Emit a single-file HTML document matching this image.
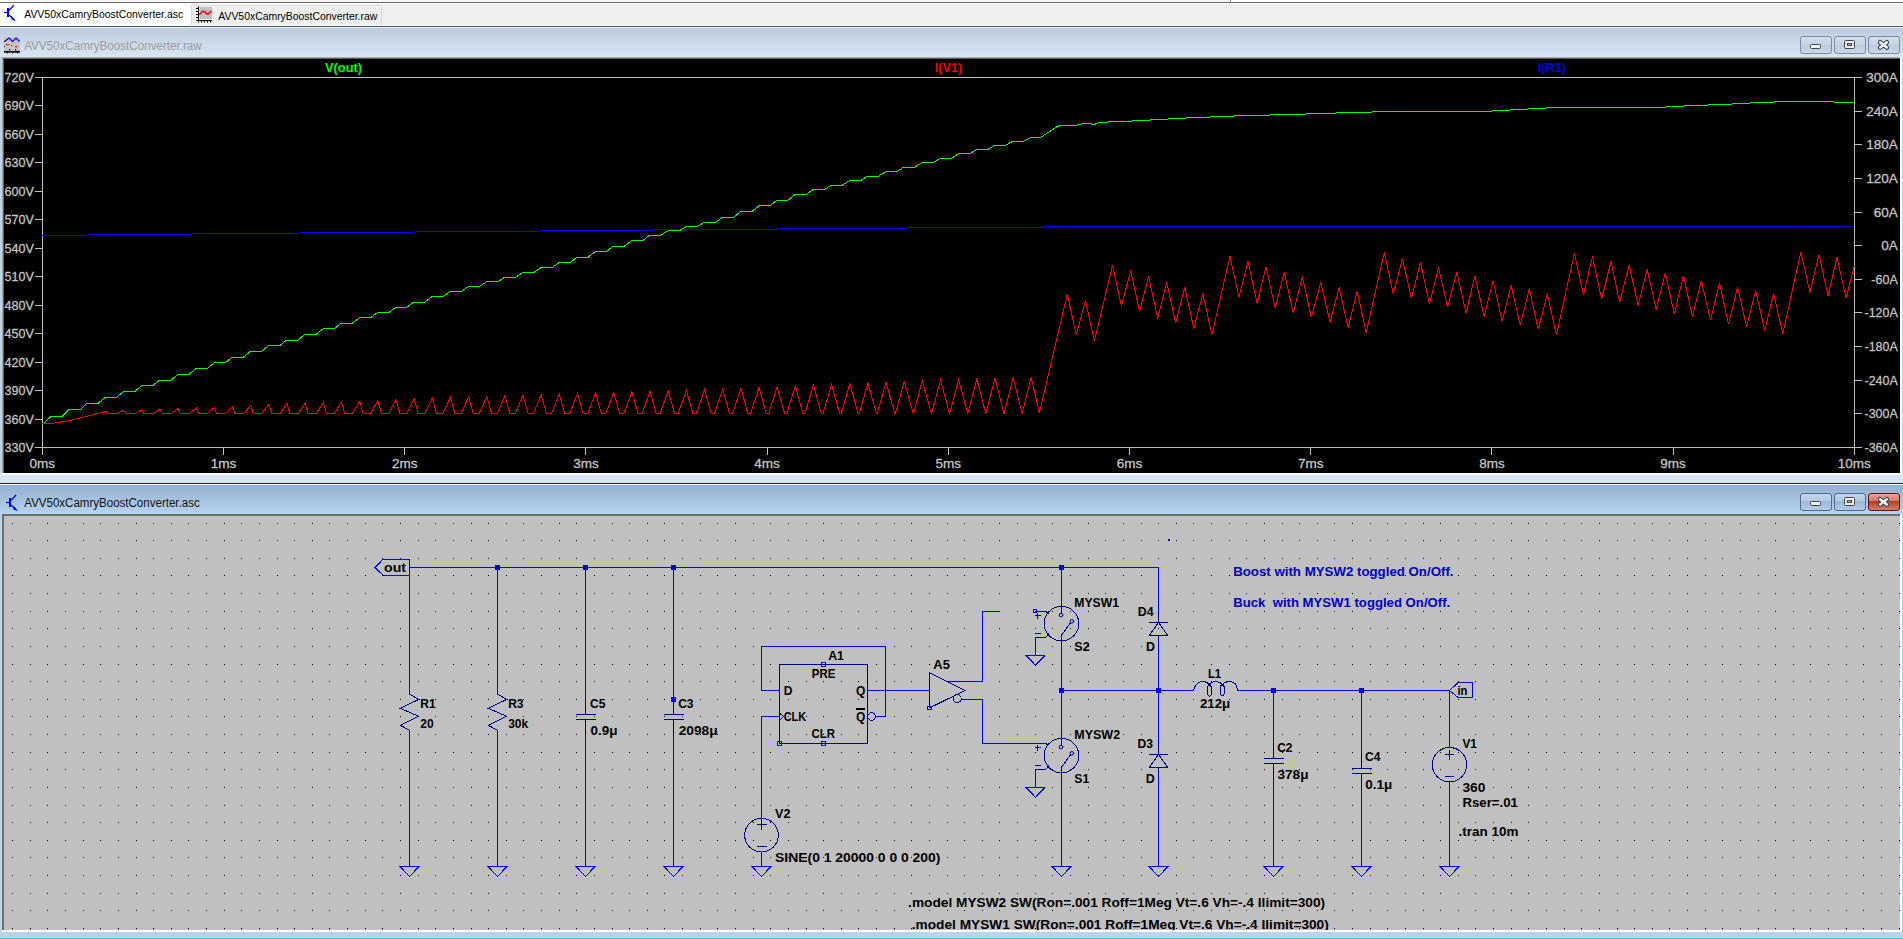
<!DOCTYPE html><html><head><meta charset="utf-8"><title>LTspice</title><style>html,body{margin:0;padding:0;width:1903px;height:939px;overflow:hidden;background:#bcd3ec;font-family:"Liberation Sans",sans-serif}</style></head><body><svg width="1903" height="939" viewBox="0 0 1903 939" style="display:block" font-family="Liberation Sans, sans-serif"><defs><clipPath id="clipsch"><rect x="4" y="516" width="1896" height="414"/></clipPath></defs><rect x="0" y="0" width="1903" height="939" fill="#bcd3ec" /><rect x="0" y="0" width="1903" height="2" fill="#f6f6f6" /><rect x="1231" y="0" width="672" height="2" fill="#ffffff" /><rect x="1230" y="0" width="1" height="2" fill="#8c8c8c" /><rect x="0" y="2" width="1903" height="1" fill="#6a6a6a" /><rect x="0" y="3" width="1903" height="23" fill="#efefef" /><rect x="0" y="3" width="1903" height="1" fill="#f8f8f8" /><rect x="0" y="25" width="1903" height="1" fill="#f8f8f8" /><rect x="0" y="3" width="191" height="23" fill="#ffffff" /><rect x="191" y="5" width="1" height="20" fill="#dadada" /><rect x="191" y="5" width="191" height="1" fill="#e2e2e2" /><rect x="381" y="5" width="1" height="20" fill="#dadada" /><rect x="0" y="26" width="1903" height="1" fill="#555555" /><defs><linearGradient id="g1" x1="0" y1="0" x2="0" y2="1"><stop offset="0" stop-color="#bccbdc"/><stop offset="1" stop-color="#d8e5f3"/></linearGradient><linearGradient id="g2" x1="0" y1="0" x2="0" y2="1"><stop offset="0" stop-color="#92afce"/><stop offset="1" stop-color="#b9d4ef"/></linearGradient><linearGradient id="bt1" x1="0" y1="0" x2="0" y2="1"><stop offset="0" stop-color="#d3deea"/><stop offset="0.5" stop-color="#c6d3e2"/><stop offset="0.5" stop-color="#bccadc"/><stop offset="1" stop-color="#ccd9e8"/></linearGradient><linearGradient id="bt2" x1="0" y1="0" x2="0" y2="1"><stop offset="0" stop-color="#c3d5ea"/><stop offset="0.45" stop-color="#b3c9e2"/><stop offset="0.45" stop-color="#9cb6d4"/><stop offset="1" stop-color="#b5cce6"/></linearGradient><linearGradient id="bt3" x1="0" y1="0" x2="0" y2="1"><stop offset="0" stop-color="#e8a595"/><stop offset="0.45" stop-color="#d37a66"/><stop offset="0.45" stop-color="#b83c22"/><stop offset="1" stop-color="#d9826a"/></linearGradient></defs><rect x="0" y="27" width="1903" height="30" fill="url(#g1)" /><rect x="0" y="27" width="1903" height="1" fill="#e4ecf5" /><rect x="0" y="473" width="1903" height="10" fill="#d7e4f2" /><rect x="0" y="484" width="1903" height="31" fill="url(#g2)" /><rect x="0" y="483" width="1903" height="1" fill="#262626" /><rect x="0" y="484" width="1903" height="1" fill="#f4f7fb" /><rect x="2" y="57" width="1898" height="1" fill="#a8a8a8" /><rect x="2" y="57" width="1" height="416" fill="#a8a8a8" /><rect x="3" y="58" width="1897" height="1" fill="#5e5e5e" /><rect x="3" y="58" width="1" height="415" fill="#5e5e5e" /><rect x="2" y="473" width="1900" height="2" fill="#ffffff" /><rect x="1900" y="57" width="2" height="418" fill="#ffffff" /><rect x="4" y="59" width="1896" height="414" fill="#000000" /><rect x="2" y="514" width="1898" height="2" fill="#6e6e6e" /><rect x="2" y="514" width="2" height="416" fill="#6e6e6e" /><rect x="2" y="930" width="1900" height="2" fill="#ffffff" /><rect x="1900" y="514" width="2" height="418" fill="#ffffff" /><rect x="4" y="516" width="1896" height="414" fill="#c0c0c0" /><rect x="0" y="932" width="1903" height="6" fill="#bcd3ec" /><rect x="0" y="938" width="1903" height="1" fill="#1ecbe0" /><rect x="1800.5" y="36.5" width="31" height="17" rx="2.5" fill="url(#bt1)" stroke="#7d8ba6" stroke-width="1"/><rect x="1834.5" y="36.5" width="31" height="17" rx="2.5" fill="url(#bt1)" stroke="#7d8ba6" stroke-width="1"/><rect x="1868.5" y="36.5" width="31" height="17" rx="2.5" fill="url(#bt1)" stroke="#7d8ba6" stroke-width="1"/><rect x="1810.5" y="44.5" width="10" height="4" rx="1" fill="#f2f2f2" stroke="#3e4656" stroke-width="1"/><rect x="1844.5" y="40.5" width="10" height="8" rx="1" fill="#f2f2f2" stroke="#3e4656" stroke-width="1"/><rect x="1847.5" y="43.5" width="4" height="2" fill="#9fb3cc" stroke="#3e4656" stroke-width="1"/><path d="M1880.1,42.3 L1886.9,47.5 M1886.9,42.3 L1880.1,47.5" stroke="#3e4656" stroke-width="4.6" stroke-linecap="round"/><path d="M1880.1,42.3 L1886.9,47.5 M1886.9,42.3 L1880.1,47.5" stroke="#f4f4f4" stroke-width="2.4" stroke-linecap="round"/><rect x="1800.5" y="493.5" width="31" height="17" rx="2.5" fill="url(#bt2)" stroke="#4f6a8f" stroke-width="1"/><rect x="1834.5" y="493.5" width="31" height="17" rx="2.5" fill="url(#bt2)" stroke="#4f6a8f" stroke-width="1"/><rect x="1868.5" y="493.5" width="31" height="17" rx="2.5" fill="url(#bt3)" stroke="#5a1520" stroke-width="1"/><rect x="1810.5" y="501.5" width="10" height="4" rx="1" fill="#f2f2f2" stroke="#3e4656" stroke-width="1"/><rect x="1844.5" y="497.5" width="10" height="8" rx="1" fill="#f2f2f2" stroke="#3e4656" stroke-width="1"/><rect x="1847.5" y="500.5" width="4" height="2" fill="#9fb3cc" stroke="#3e4656" stroke-width="1"/><path d="M1880.1,499.29999999999995 L1886.9,504.5 M1886.9,499.29999999999995 L1880.1,504.5" stroke="#3e4656" stroke-width="4.6" stroke-linecap="round"/><path d="M1880.1,499.29999999999995 L1886.9,504.5 M1886.9,499.29999999999995 L1880.1,504.5" stroke="#f4f4f4" stroke-width="2.4" stroke-linecap="round"/><g transform="translate(4,4)" stroke="#0000ff" fill="none"><path d="M0,8.5 H3" stroke-width="1.3"/><rect x="3" y="4" width="2" height="9" fill="#0000ff" stroke="none"/><path d="M5,6.5 L10,1" stroke-width="1.2"/><path d="M5,11 L11,16.5" stroke-width="1.2"/><path d="M7.5,12.5 L10,15.2 L8.3,15.8 Z" fill="#0000ff" stroke-width="1"/></g><g transform="translate(6,494)" stroke="#0000ff" fill="none"><path d="M0,8.5 H3" stroke-width="1.3"/><rect x="3" y="4" width="2" height="9" fill="#0000ff" stroke="none"/><path d="M5,6.5 L10,1" stroke-width="1.2"/><path d="M5,11 L11,16.5" stroke-width="1.2"/><path d="M7.5,12.5 L10,15.2 L8.3,15.8 Z" fill="#0000ff" stroke-width="1"/></g><g><rect x="200" y="7" width="12" height="12" fill="#c0c0c0"/><path d="M198.5,6.5 V22.5 M196,20.5 H212 M196,8.5 H198.5 M196,11.5 H198.5 M196,14.5 H198.5 M196,17.5 H198.5 M201.5,20.5 V22.5 M204.5,20.5 V22.5 M207.5,20.5 V22.5 M210.5,20.5 V22.5" stroke="#000" stroke-width="1.1" fill="none"/><path d="M199,15 L202.3,11.5 L204.8,11.5 L206.6,14 L208.3,14 L211.6,10.8" stroke="#ff0000" stroke-width="1.6" fill="none"/></g><g><rect x="4" y="37" width="16" height="16" fill="#c4c4c4"/><path d="M4.5,41.5 L9,38 L12.5,41.5 L16,38 L19.5,41.5" stroke="#0000ff" stroke-width="1.2" fill="none"/><rect x="6" y="44" width="3" height="1.2" fill="#ff0000"/><rect x="11" y="45" width="1.2" height="1.2" fill="#ff0000"/><rect x="15" y="46" width="2.4" height="1.2" fill="#ff0000"/><rect x="9" y="49" width="1.3" height="1.3" fill="#000080"/><rect x="15" y="49" width="1.3" height="1.3" fill="#000080"/><rect x="4" y="41" width="1" height="1" fill="#000"/><rect x="4" y="46" width="1" height="1" fill="#000"/><rect x="4" y="51" width="16" height="1.6" fill="#000"/><path d="M7.5,52.5 V53.5 M12.5,52.5 V53.5 M17.5,52.5 V53.5" stroke="#000" stroke-width="1"/></g><text xml:space="preserve" x="24.2" y="17.6" font-size="11.6" font-weight="normal" fill="#000" textLength="159" lengthAdjust="spacingAndGlyphs" >AVV50xCamryBoostConverter.asc</text><text xml:space="preserve" x="218.3" y="19.8" font-size="11.6" font-weight="normal" fill="#000" textLength="159" lengthAdjust="spacingAndGlyphs" >AVV50xCamryBoostConverter.raw</text><text xml:space="preserve" x="24.2" y="49.6" font-size="12" font-weight="normal" fill="#9c9c9c" textLength="177.5" lengthAdjust="spacingAndGlyphs" >AVV50xCamryBoostConverter.raw</text><text xml:space="preserve" x="24.3" y="506.6" font-size="12" font-weight="normal" fill="#141414" textLength="175.4" lengthAdjust="spacingAndGlyphs" >AVV50xCamryBoostConverter.asc</text><line x1="35" y1="77.5" x2="1862" y2="77.5" stroke="#bdbdbd" stroke-width="1"/><line x1="35" y1="447.5" x2="1862" y2="447.5" stroke="#bdbdbd" stroke-width="1"/><line x1="42.5" y1="77" x2="42.5" y2="455" stroke="#bdbdbd" stroke-width="1"/><line x1="1854.5" y1="77" x2="1854.5" y2="455" stroke="#bdbdbd" stroke-width="1"/><line x1="35" y1="77.5" x2="42" y2="77.5" stroke="#bdbdbd" stroke-width="1"/><text xml:space="preserve" x="4.5" y="81.9" font-size="13.5" font-weight="normal" fill="#c8c8c8" textLength="29.3" lengthAdjust="spacingAndGlyphs" stroke="#c0c0c0" stroke-width="0.3">720V</text><line x1="35" y1="105.5" x2="42" y2="105.5" stroke="#bdbdbd" stroke-width="1"/><text xml:space="preserve" x="4.5" y="109.9" font-size="13.5" font-weight="normal" fill="#c8c8c8" textLength="29.3" lengthAdjust="spacingAndGlyphs" stroke="#c0c0c0" stroke-width="0.3">690V</text><line x1="35" y1="134.5" x2="42" y2="134.5" stroke="#bdbdbd" stroke-width="1"/><text xml:space="preserve" x="4.5" y="138.9" font-size="13.5" font-weight="normal" fill="#c8c8c8" textLength="29.3" lengthAdjust="spacingAndGlyphs" stroke="#c0c0c0" stroke-width="0.3">660V</text><line x1="35" y1="162.5" x2="42" y2="162.5" stroke="#bdbdbd" stroke-width="1"/><text xml:space="preserve" x="4.5" y="166.9" font-size="13.5" font-weight="normal" fill="#c8c8c8" textLength="29.3" lengthAdjust="spacingAndGlyphs" stroke="#c0c0c0" stroke-width="0.3">630V</text><line x1="35" y1="191.5" x2="42" y2="191.5" stroke="#bdbdbd" stroke-width="1"/><text xml:space="preserve" x="4.5" y="195.9" font-size="13.5" font-weight="normal" fill="#c8c8c8" textLength="29.3" lengthAdjust="spacingAndGlyphs" stroke="#c0c0c0" stroke-width="0.3">600V</text><line x1="35" y1="219.5" x2="42" y2="219.5" stroke="#bdbdbd" stroke-width="1"/><text xml:space="preserve" x="4.5" y="223.9" font-size="13.5" font-weight="normal" fill="#c8c8c8" textLength="29.3" lengthAdjust="spacingAndGlyphs" stroke="#c0c0c0" stroke-width="0.3">570V</text><line x1="35" y1="248.5" x2="42" y2="248.5" stroke="#bdbdbd" stroke-width="1"/><text xml:space="preserve" x="4.5" y="252.9" font-size="13.5" font-weight="normal" fill="#c8c8c8" textLength="29.3" lengthAdjust="spacingAndGlyphs" stroke="#c0c0c0" stroke-width="0.3">540V</text><line x1="35" y1="276.5" x2="42" y2="276.5" stroke="#bdbdbd" stroke-width="1"/><text xml:space="preserve" x="4.5" y="280.9" font-size="13.5" font-weight="normal" fill="#c8c8c8" textLength="29.3" lengthAdjust="spacingAndGlyphs" stroke="#c0c0c0" stroke-width="0.3">510V</text><line x1="35" y1="305.5" x2="42" y2="305.5" stroke="#bdbdbd" stroke-width="1"/><text xml:space="preserve" x="4.5" y="309.9" font-size="13.5" font-weight="normal" fill="#c8c8c8" textLength="29.3" lengthAdjust="spacingAndGlyphs" stroke="#c0c0c0" stroke-width="0.3">480V</text><line x1="35" y1="333.5" x2="42" y2="333.5" stroke="#bdbdbd" stroke-width="1"/><text xml:space="preserve" x="4.5" y="337.9" font-size="13.5" font-weight="normal" fill="#c8c8c8" textLength="29.3" lengthAdjust="spacingAndGlyphs" stroke="#c0c0c0" stroke-width="0.3">450V</text><line x1="35" y1="362.5" x2="42" y2="362.5" stroke="#bdbdbd" stroke-width="1"/><text xml:space="preserve" x="4.5" y="366.9" font-size="13.5" font-weight="normal" fill="#c8c8c8" textLength="29.3" lengthAdjust="spacingAndGlyphs" stroke="#c0c0c0" stroke-width="0.3">420V</text><line x1="35" y1="390.5" x2="42" y2="390.5" stroke="#bdbdbd" stroke-width="1"/><text xml:space="preserve" x="4.5" y="394.9" font-size="13.5" font-weight="normal" fill="#c8c8c8" textLength="29.3" lengthAdjust="spacingAndGlyphs" stroke="#c0c0c0" stroke-width="0.3">390V</text><line x1="35" y1="419.5" x2="42" y2="419.5" stroke="#bdbdbd" stroke-width="1"/><text xml:space="preserve" x="4.5" y="423.9" font-size="13.5" font-weight="normal" fill="#c8c8c8" textLength="29.3" lengthAdjust="spacingAndGlyphs" stroke="#c0c0c0" stroke-width="0.3">360V</text><line x1="35" y1="447.5" x2="42" y2="447.5" stroke="#bdbdbd" stroke-width="1"/><text xml:space="preserve" x="4.5" y="451.9" font-size="13.5" font-weight="normal" fill="#c8c8c8" textLength="29.3" lengthAdjust="spacingAndGlyphs" stroke="#c0c0c0" stroke-width="0.3">330V</text><line x1="1855" y1="77.5" x2="1862" y2="77.5" stroke="#bdbdbd" stroke-width="1"/><text xml:space="preserve" x="1897.8" y="81.9" font-size="13.5" font-weight="normal" fill="#c8c8c8" text-anchor="end" stroke="#c0c0c0" stroke-width="0.3">300A</text><line x1="1855" y1="111.5" x2="1862" y2="111.5" stroke="#bdbdbd" stroke-width="1"/><text xml:space="preserve" x="1897.8" y="115.9" font-size="13.5" font-weight="normal" fill="#c8c8c8" text-anchor="end" stroke="#c0c0c0" stroke-width="0.3">240A</text><line x1="1855" y1="144.5" x2="1862" y2="144.5" stroke="#bdbdbd" stroke-width="1"/><text xml:space="preserve" x="1897.8" y="148.9" font-size="13.5" font-weight="normal" fill="#c8c8c8" text-anchor="end" stroke="#c0c0c0" stroke-width="0.3">180A</text><line x1="1855" y1="178.5" x2="1862" y2="178.5" stroke="#bdbdbd" stroke-width="1"/><text xml:space="preserve" x="1897.8" y="182.9" font-size="13.5" font-weight="normal" fill="#c8c8c8" text-anchor="end" stroke="#c0c0c0" stroke-width="0.3">120A</text><line x1="1855" y1="212.5" x2="1862" y2="212.5" stroke="#bdbdbd" stroke-width="1"/><text xml:space="preserve" x="1897.8" y="216.9" font-size="13.5" font-weight="normal" fill="#c8c8c8" text-anchor="end" stroke="#c0c0c0" stroke-width="0.3">60A</text><line x1="1855" y1="245.5" x2="1862" y2="245.5" stroke="#bdbdbd" stroke-width="1"/><text xml:space="preserve" x="1897.8" y="249.9" font-size="13.5" font-weight="normal" fill="#c8c8c8" text-anchor="end" stroke="#c0c0c0" stroke-width="0.3">0A</text><line x1="1855" y1="279.5" x2="1862" y2="279.5" stroke="#bdbdbd" stroke-width="1"/><text xml:space="preserve" x="1871.3" y="283.9" font-size="13.5" font-weight="normal" fill="#c8c8c8" textLength="26.5" lengthAdjust="spacingAndGlyphs" stroke="#c0c0c0" stroke-width="0.3">-60A</text><line x1="1855" y1="312.5" x2="1862" y2="312.5" stroke="#bdbdbd" stroke-width="1"/><text xml:space="preserve" x="1864.5" y="316.9" font-size="13.5" font-weight="normal" fill="#c8c8c8" textLength="33.3" lengthAdjust="spacingAndGlyphs" stroke="#c0c0c0" stroke-width="0.3">-120A</text><line x1="1855" y1="346.5" x2="1862" y2="346.5" stroke="#bdbdbd" stroke-width="1"/><text xml:space="preserve" x="1864.5" y="350.9" font-size="13.5" font-weight="normal" fill="#c8c8c8" textLength="33.3" lengthAdjust="spacingAndGlyphs" stroke="#c0c0c0" stroke-width="0.3">-180A</text><line x1="1855" y1="380.5" x2="1862" y2="380.5" stroke="#bdbdbd" stroke-width="1"/><text xml:space="preserve" x="1864.5" y="384.9" font-size="13.5" font-weight="normal" fill="#c8c8c8" textLength="33.3" lengthAdjust="spacingAndGlyphs" stroke="#c0c0c0" stroke-width="0.3">-240A</text><line x1="1855" y1="413.5" x2="1862" y2="413.5" stroke="#bdbdbd" stroke-width="1"/><text xml:space="preserve" x="1864.5" y="417.9" font-size="13.5" font-weight="normal" fill="#c8c8c8" textLength="33.3" lengthAdjust="spacingAndGlyphs" stroke="#c0c0c0" stroke-width="0.3">-300A</text><line x1="1855" y1="447.5" x2="1862" y2="447.5" stroke="#bdbdbd" stroke-width="1"/><text xml:space="preserve" x="1864.5" y="451.9" font-size="13.5" font-weight="normal" fill="#c8c8c8" textLength="33.3" lengthAdjust="spacingAndGlyphs" stroke="#c0c0c0" stroke-width="0.3">-360A</text><line x1="42.5" y1="447" x2="42.5" y2="455" stroke="#bdbdbd" stroke-width="1"/><text xml:space="preserve" x="42.3" y="468.2" font-size="13.5" font-weight="normal" fill="#c8c8c8" text-anchor="middle" stroke="#c0c0c0" stroke-width="0.3">0ms</text><line x1="223.5" y1="447" x2="223.5" y2="455" stroke="#bdbdbd" stroke-width="1"/><text xml:space="preserve" x="223.5" y="468.2" font-size="13.5" font-weight="normal" fill="#c8c8c8" text-anchor="middle" stroke="#c0c0c0" stroke-width="0.3">1ms</text><line x1="404.5" y1="447" x2="404.5" y2="455" stroke="#bdbdbd" stroke-width="1"/><text xml:space="preserve" x="404.7" y="468.2" font-size="13.5" font-weight="normal" fill="#c8c8c8" text-anchor="middle" stroke="#c0c0c0" stroke-width="0.3">2ms</text><line x1="585.5" y1="447" x2="585.5" y2="455" stroke="#bdbdbd" stroke-width="1"/><text xml:space="preserve" x="585.8999999999999" y="468.2" font-size="13.5" font-weight="normal" fill="#c8c8c8" text-anchor="middle" stroke="#c0c0c0" stroke-width="0.3">3ms</text><line x1="767.5" y1="447" x2="767.5" y2="455" stroke="#bdbdbd" stroke-width="1"/><text xml:space="preserve" x="767.0999999999999" y="468.2" font-size="13.5" font-weight="normal" fill="#c8c8c8" text-anchor="middle" stroke="#c0c0c0" stroke-width="0.3">4ms</text><line x1="948.5" y1="447" x2="948.5" y2="455" stroke="#bdbdbd" stroke-width="1"/><text xml:space="preserve" x="948.3" y="468.2" font-size="13.5" font-weight="normal" fill="#c8c8c8" text-anchor="middle" stroke="#c0c0c0" stroke-width="0.3">5ms</text><line x1="1129.5" y1="447" x2="1129.5" y2="455" stroke="#bdbdbd" stroke-width="1"/><text xml:space="preserve" x="1129.4999999999998" y="468.2" font-size="13.5" font-weight="normal" fill="#c8c8c8" text-anchor="middle" stroke="#c0c0c0" stroke-width="0.3">6ms</text><line x1="1310.5" y1="447" x2="1310.5" y2="455" stroke="#bdbdbd" stroke-width="1"/><text xml:space="preserve" x="1310.6999999999998" y="468.2" font-size="13.5" font-weight="normal" fill="#c8c8c8" text-anchor="middle" stroke="#c0c0c0" stroke-width="0.3">7ms</text><line x1="1491.5" y1="447" x2="1491.5" y2="455" stroke="#bdbdbd" stroke-width="1"/><text xml:space="preserve" x="1491.8999999999999" y="468.2" font-size="13.5" font-weight="normal" fill="#c8c8c8" text-anchor="middle" stroke="#c0c0c0" stroke-width="0.3">8ms</text><line x1="1673.5" y1="447" x2="1673.5" y2="455" stroke="#bdbdbd" stroke-width="1"/><text xml:space="preserve" x="1673.1" y="468.2" font-size="13.5" font-weight="normal" fill="#c8c8c8" text-anchor="middle" stroke="#c0c0c0" stroke-width="0.3">9ms</text><line x1="1854.5" y1="447" x2="1854.5" y2="455" stroke="#bdbdbd" stroke-width="1"/><text xml:space="preserve" x="1854.3" y="468.2" font-size="13.5" font-weight="normal" fill="#c8c8c8" text-anchor="middle" stroke="#c0c0c0" stroke-width="0.3">10ms</text><text xml:space="preserve" x="325" y="72" font-size="13" font-weight="bold" fill="#00ff00" textLength="37" lengthAdjust="spacingAndGlyphs" >V(out)</text><text xml:space="preserve" x="934.8" y="72" font-size="13" font-weight="bold" fill="#ff0000" textLength="27.5" lengthAdjust="spacingAndGlyphs" >I(V1)</text><text xml:space="preserve" x="1537.8" y="72" font-size="13" font-weight="bold" fill="#0000ff" textLength="27.8" lengthAdjust="spacingAndGlyphs" >I(R1)</text><g fill="none" stroke-width="1" shape-rendering="crispEdges"><path d="M42.0,235.5 L45.0,235.5 L48.0,235.4 L51.0,235.3 L54.0,235.3 L57.0,235.3 L60.0,235.2 L63.0,235.2 L66.0,235.2 L69.0,235.1 L72.0,235.1 L75.0,235.1 L78.0,235.0 L81.0,235.0 L84.0,235.0 L87.0,235.0 L90.0,234.9 L93.0,234.9 L96.0,234.9 L99.0,234.8 L102.0,234.8 L105.0,234.8 L108.0,234.7 L111.0,234.7 L114.0,234.7 L117.0,234.7 L120.0,234.6 L123.0,234.6 L126.0,234.6 L129.0,234.6 L132.0,234.5 L135.0,234.5 L138.0,234.5 L141.0,234.4 L144.0,234.4 L147.0,234.4 L150.0,234.4 L153.0,234.3 L156.0,234.3 L159.0,234.3 L162.0,234.2 L165.0,234.2 L168.0,234.2 L171.0,234.2 L174.0,234.1 L177.0,234.1 L180.0,234.1 L183.0,234.1 L186.0,234.0 L189.0,234.0 L192.0,234.0 L195.0,233.9 L198.0,233.9 L201.0,233.9 L204.0,233.9 L207.0,233.8 L210.0,233.8 L213.0,233.8 L216.0,233.7 L219.0,233.7 L222.0,233.7 L225.0,233.7 L228.0,233.6 L231.0,233.6 L234.0,233.6 L237.0,233.5 L240.0,233.5 L243.0,233.5 L246.0,233.5 L249.0,233.4 L252.0,233.4 L255.0,233.4 L258.0,233.3 L261.0,233.3 L264.0,233.3 L267.0,233.3 L270.0,233.2 L273.0,233.2 L276.0,233.2 L279.0,233.2 L282.0,233.1 L285.0,233.1 L288.0,233.1 L291.0,233.0 L294.0,233.0 L297.0,233.0 L300.0,233.0 L303.0,232.9 L306.0,232.9 L309.0,232.9 L312.0,232.9 L315.0,232.8 L318.0,232.8 L321.0,232.8 L324.0,232.7 L327.0,232.7 L330.0,232.7 L333.0,232.7 L336.0,232.6 L339.0,232.6 L342.0,232.6 L345.0,232.6 L348.0,232.5 L351.0,232.5 L354.0,232.5 L357.0,232.4 L360.0,232.4 L363.0,232.4 L366.0,232.4 L369.0,232.3 L372.0,232.3 L375.0,232.3 L378.0,232.3 L381.0,232.2 L384.0,232.2 L387.0,232.2 L390.0,232.2 L393.0,232.1 L396.0,232.1 L399.0,232.1 L402.0,232.1 L405.0,232.0 L408.0,232.0 L411.0,232.0 L414.0,232.0 L417.0,231.9 L420.0,231.9 L423.0,231.9 L426.0,231.9 L429.0,231.8 L432.0,231.8 L435.0,231.8 L438.0,231.7 L441.0,231.7 L444.0,231.7 L447.0,231.7 L450.0,231.6 L453.0,231.6 L456.0,231.6 L459.0,231.6 L462.0,231.6 L465.0,231.5 L468.0,231.5 L471.0,231.5 L474.0,231.5 L477.0,231.4 L480.0,231.4 L483.0,231.4 L486.0,231.4 L489.0,231.3 L492.0,231.3 L495.0,231.3 L498.0,231.3 L501.0,231.3 L504.0,231.2 L507.0,231.2 L510.0,231.2 L513.0,231.2 L516.0,231.1 L519.0,231.1 L522.0,231.1 L525.0,231.1 L528.0,231.0 L531.0,231.0 L534.0,231.0 L537.0,231.0 L540.0,231.0 L543.0,230.9 L546.0,230.9 L549.0,230.9 L552.0,230.9 L555.0,230.8 L558.0,230.8 L561.0,230.8 L564.0,230.7 L567.0,230.7 L570.0,230.7 L573.0,230.7 L576.0,230.6 L579.0,230.6 L582.0,230.6 L585.0,230.6 L588.0,230.5 L591.0,230.5 L594.0,230.5 L597.0,230.5 L600.0,230.4 L603.0,230.4 L606.0,230.4 L609.0,230.3 L612.0,230.3 L615.0,230.3 L618.0,230.3 L621.0,230.2 L624.0,230.2 L627.0,230.2 L630.0,230.2 L633.0,230.1 L636.0,230.1 L639.0,230.1 L642.0,230.0 L645.0,230.0 L648.0,230.0 L651.0,230.0 L654.0,230.0 L657.0,229.9 L660.0,229.9 L663.0,229.9 L666.0,229.9 L669.0,229.8 L672.0,229.8 L675.0,229.8 L678.0,229.8 L681.0,229.8 L684.0,229.7 L687.0,229.7 L690.0,229.7 L693.0,229.7 L696.0,229.7 L699.0,229.6 L702.0,229.6 L705.0,229.6 L708.0,229.6 L711.0,229.6 L714.0,229.5 L717.0,229.5 L720.0,229.5 L723.0,229.5 L726.0,229.4 L729.0,229.4 L732.0,229.4 L735.0,229.3 L738.0,229.3 L741.0,229.3 L744.0,229.3 L747.0,229.2 L750.0,229.2 L753.0,229.2 L756.0,229.1 L759.0,229.1 L762.0,229.1 L765.0,229.1 L768.0,229.0 L771.0,229.0 L774.0,229.0 L777.0,229.0 L780.0,228.9 L783.0,228.9 L786.0,228.9 L789.0,228.8 L792.0,228.8 L795.0,228.8 L798.0,228.8 L801.0,228.7 L804.0,228.7 L807.0,228.7 L810.0,228.7 L813.0,228.6 L816.0,228.6 L819.0,228.6 L822.0,228.6 L825.0,228.6 L828.0,228.5 L831.0,228.5 L834.0,228.5 L837.0,228.5 L840.0,228.4 L843.0,228.4 L846.0,228.4 L849.0,228.4 L852.0,228.4 L855.0,228.3 L858.0,228.3 L861.0,228.3 L864.0,228.3 L867.0,228.2 L870.0,228.2 L873.0,228.2 L876.0,228.2 L879.0,228.2 L882.0,228.1 L885.0,228.1 L888.0,228.1 L891.0,228.1 L894.0,228.0 L897.0,228.0 L900.0,228.0 L903.0,228.0 L906.0,228.0 L909.0,227.9 L912.0,227.9 L915.0,227.9 L918.0,227.9 L921.0,227.8 L924.0,227.8 L927.0,227.8 L930.0,227.8 L933.0,227.8 L936.0,227.7 L939.0,227.7 L942.0,227.7 L945.0,227.7 L948.0,227.7 L951.0,227.6 L954.0,227.6 L957.0,227.6 L960.0,227.6 L963.0,227.6 L966.0,227.5 L969.0,227.5 L972.0,227.5 L975.0,227.5 L978.0,227.4 L981.0,227.4 L984.0,227.4 L987.0,227.4 L990.0,227.4 L993.0,227.3 L996.0,227.3 L999.0,227.3 L1002.0,227.3 L1005.0,227.3 L1008.0,227.2 L1011.0,227.2 L1014.0,227.2 L1017.0,227.2 L1020.0,227.2 L1023.0,227.1 L1026.0,227.1 L1029.0,227.1 L1032.0,227.1 L1035.0,227.1 L1038.0,227.0 L1041.0,227.0 L1044.0,227.0 L1047.0,226.9 L1050.0,226.9 L1053.0,226.8 L1056.0,226.8 L1059.0,226.8 L1062.0,226.8 L1065.0,226.7 L1068.0,226.7 L1071.0,226.7 L1074.0,226.7 L1077.0,226.7 L1080.0,226.7 L1083.0,226.7 L1086.0,226.7 L1089.0,226.7 L1092.0,226.7 L1095.0,226.7 L1098.0,226.7 L1101.0,226.7 L1104.0,226.6 L1107.0,226.6 L1110.0,226.6 L1113.0,226.6 L1116.0,226.6 L1119.0,226.6 L1122.0,226.6 L1125.0,226.6 L1128.0,226.6 L1131.0,226.6 L1134.0,226.6 L1137.0,226.6 L1140.0,226.6 L1143.0,226.6 L1146.0,226.6 L1149.0,226.6 L1152.0,226.6 L1155.0,226.6 L1158.0,226.6 L1161.0,226.6 L1164.0,226.6 L1167.0,226.6 L1170.0,226.5 L1173.0,226.5 L1176.0,226.5 L1179.0,226.5 L1182.0,226.5 L1185.0,226.5 L1188.0,226.5 L1191.0,226.5 L1194.0,226.5 L1197.0,226.5 L1200.0,226.5 L1203.0,226.5 L1206.0,226.5 L1209.0,226.5 L1212.0,226.5 L1215.0,226.5 L1218.0,226.5 L1221.0,226.5 L1224.0,226.5 L1227.0,226.5 L1230.0,226.5 L1233.0,226.5 L1236.0,226.5 L1239.0,226.5 L1242.0,226.5 L1245.0,226.5 L1248.0,226.5 L1251.0,226.4 L1254.0,226.4 L1257.0,226.4 L1260.0,226.4 L1263.0,226.4 L1266.0,226.4 L1269.0,226.4 L1272.0,226.4 L1275.0,226.4 L1278.0,226.4 L1281.0,226.4 L1284.0,226.4 L1287.0,226.4 L1290.0,226.4 L1293.0,226.4 L1296.0,226.4 L1299.0,226.4 L1302.0,226.4 L1305.0,226.4 L1308.0,226.4 L1311.0,226.4 L1314.0,226.4 L1317.0,226.4 L1320.0,226.4 L1323.0,226.4 L1326.0,226.4 L1329.0,226.4 L1332.0,226.4 L1335.0,226.4 L1338.0,226.4 L1341.0,226.4 L1344.0,226.4 L1347.0,226.4 L1350.0,226.4 L1353.0,226.4 L1356.0,226.4 L1359.0,226.4 L1362.0,226.4 L1365.0,226.4 L1368.0,226.3 L1371.0,226.3 L1374.0,226.3 L1377.0,226.3 L1380.0,226.3 L1383.0,226.3 L1386.0,226.3 L1389.0,226.3 L1392.0,226.3 L1395.0,226.3 L1398.0,226.3 L1401.0,226.3 L1404.0,226.3 L1407.0,226.3 L1410.0,226.3 L1413.0,226.3 L1416.0,226.3 L1419.0,226.3 L1422.0,226.3 L1425.0,226.3 L1428.0,226.3 L1431.0,226.3 L1434.0,226.3 L1437.0,226.3 L1440.0,226.3 L1443.0,226.3 L1446.0,226.3 L1449.0,226.3 L1452.0,226.3 L1455.0,226.3 L1458.0,226.3 L1461.0,226.3 L1464.0,226.3 L1467.0,226.3 L1470.0,226.3 L1473.0,226.3 L1476.0,226.3 L1479.0,226.3 L1482.0,226.3 L1485.0,226.3 L1488.0,226.3 L1491.0,226.3 L1494.0,226.3 L1497.0,226.3 L1500.0,226.3 L1503.0,226.3 L1506.0,226.3 L1509.0,226.3 L1512.0,226.3 L1515.0,226.3 L1518.0,226.3 L1521.0,226.3 L1524.0,226.3 L1527.0,226.3 L1530.0,226.3 L1533.0,226.2 L1536.0,226.2 L1539.0,226.2 L1542.0,226.2 L1545.0,226.2 L1548.0,226.2 L1551.0,226.2 L1554.0,226.2 L1557.0,226.2 L1560.0,226.2 L1563.0,226.2 L1566.0,226.2 L1569.0,226.2 L1572.0,226.2 L1575.0,226.2 L1578.0,226.2 L1581.0,226.2 L1584.0,226.2 L1587.0,226.2 L1590.0,226.2 L1593.0,226.2 L1596.0,226.2 L1599.0,226.2 L1602.0,226.2 L1605.0,226.2 L1608.0,226.2 L1611.0,226.2 L1614.0,226.2 L1617.0,226.2 L1620.0,226.2 L1623.0,226.2 L1626.0,226.2 L1629.0,226.2 L1632.0,226.2 L1635.0,226.2 L1638.0,226.2 L1641.0,226.2 L1644.0,226.2 L1647.0,226.2 L1650.0,226.2 L1653.0,226.2 L1656.0,226.2 L1659.0,226.2 L1662.0,226.2 L1665.0,226.2 L1668.0,226.2 L1671.0,226.2 L1674.0,226.2 L1677.0,226.2 L1680.0,226.2 L1683.0,226.2 L1686.0,226.2 L1689.0,226.2 L1692.0,226.2 L1695.0,226.2 L1698.0,226.2 L1701.0,226.1 L1704.0,226.1 L1707.0,226.1 L1710.0,226.1 L1713.0,226.1 L1716.0,226.1 L1719.0,226.1 L1722.0,226.1 L1725.0,226.1 L1728.0,226.1 L1731.0,226.1 L1734.0,226.1 L1737.0,226.1 L1740.0,226.1 L1743.0,226.1 L1746.0,226.1 L1749.0,226.1 L1752.0,226.1 L1755.0,226.1 L1758.0,226.1 L1761.0,226.1 L1764.0,226.1 L1767.0,226.1 L1770.0,226.1 L1773.0,226.1 L1776.0,226.0 L1779.0,226.0 L1782.0,226.0 L1785.0,226.0 L1788.0,226.0 L1791.0,226.0 L1794.0,226.0 L1797.0,226.0 L1800.0,226.0 L1803.0,226.0 L1806.0,226.0 L1809.0,226.0 L1812.0,226.0 L1815.0,226.0 L1818.0,226.0 L1821.0,226.0 L1824.0,226.0 L1827.0,226.0 L1830.0,226.0 L1833.0,226.0 L1836.0,226.1 L1839.0,226.1 L1842.0,226.1 L1845.0,226.1 L1848.0,226.1 L1851.0,226.1 L1854.0,226.1" stroke="#0000ff"/><path d="M42.5,423.0 L43.9,423.0 L50.9,416.6 L62.0,416.6 L69.0,409.7 L80.1,409.7 L87.1,403.2 L98.3,403.2 L105.3,397.2 L116.5,397.2 L123.5,391.7 L134.6,391.7 L141.6,385.5 L152.7,385.5 L159.7,380.2 L170.9,380.2 L177.9,374.4 L189.0,374.4 L196.0,368.6 L207.2,368.6 L214.2,362.8 L225.3,362.8 L232.3,357.0 L243.5,357.0 L250.5,351.3 L261.6,351.3 L268.6,345.6 L279.8,345.6 L286.8,340.0 L297.9,340.0 L304.9,334.4 L316.1,334.4 L323.1,328.8 L334.2,328.8 L341.2,323.1 L352.4,323.1 L359.4,317.8 L370.6,317.8 L377.6,312.5 L388.7,312.5 L395.7,307.3 L406.8,307.3 L413.8,302.0 L425.0,302.0 L432.0,296.7 L443.1,296.7 L450.1,291.4 L461.3,291.4 L468.3,286.6 L479.4,286.6 L486.4,281.9 L497.6,281.9 L504.6,277.2 L515.8,277.2 L522.8,272.4 L533.9,272.4 L540.9,267.7 L552.0,267.7 L559.0,262.6 L570.2,262.6 L577.2,257.0 L588.4,257.0 L595.4,251.5 L606.5,251.5 L613.5,246.0 L624.6,246.0 L631.6,240.5 L642.8,240.5 L649.8,235.0 L661.0,235.0 L668.0,230.8 L679.1,230.8 L686.1,226.6 L697.2,226.6 L704.2,222.4 L715.4,222.4 L722.4,217.3 L733.6,217.3 L740.6,211.6 L751.7,211.6 L758.7,205.9 L769.9,205.9 L776.9,200.2 L788.0,200.2 L795.0,194.5 L806.1,194.5 L813.1,189.6 L824.3,189.6 L831.3,185.1 L842.5,185.1 L849.5,180.6 L860.6,180.6 L867.6,176.0 L878.8,176.0 L885.8,171.5 L896.9,171.5 L903.9,167.0 L915.0,167.0 L922.0,162.6 L933.2,162.6 L940.2,158.3 L951.4,158.3 L958.4,153.9 L969.5,153.9 L976.5,149.6 L987.6,149.6 L994.6,145.2 L1005.8,145.2 L1012.8,141.2 L1024.0,141.2 L1031.0,137.3 L1040.8,137.3 L1057.6,126.3 L1061.3,125.2 L1076.6,125.2 L1083.9,123.3 L1094.4,124.4 L1099.7,122.5 L1105.0,122.5 L1111.0,121.5 L1117.0,121.5 L1123.0,121.5 L1129.0,121.5 L1135.0,120.5 L1141.0,120.5 L1147.0,120.5 L1153.0,119.5 L1159.0,119.5 L1165.0,119.5 L1171.0,118.5 L1177.0,118.5 L1183.0,118.5 L1189.0,117.5 L1195.0,117.5 L1201.0,117.5 L1207.0,117.5 L1213.0,116.5 L1219.0,116.5 L1225.0,116.5 L1231.0,116.5 L1237.0,115.5 L1243.0,115.5 L1249.0,115.5 L1255.0,115.5 L1261.0,115.5 L1267.0,115.5 L1273.0,114.5 L1279.0,114.5 L1285.0,114.5 L1291.0,114.5 L1297.0,114.5 L1303.0,114.5 L1309.0,113.5 L1315.0,113.5 L1321.0,113.5 L1327.0,113.5 L1333.0,113.5 L1339.0,112.5 L1345.0,112.5 L1351.0,112.5 L1357.0,112.5 L1363.0,112.5 L1369.0,112.5 L1375.0,111.5 L1381.0,111.5 L1387.0,111.5 L1393.0,111.5 L1399.0,111.5 L1405.0,111.5 L1411.0,111.5 L1417.0,111.5 L1423.0,111.5 L1429.0,111.5 L1435.0,111.5 L1441.0,111.5 L1447.0,111.5 L1453.0,111.5 L1459.0,111.5 L1465.0,111.5 L1471.0,111.5 L1477.0,111.5 L1483.0,111.5 L1489.0,111.5 L1495.0,110.5 L1501.0,110.5 L1507.0,110.5 L1513.0,109.5 L1519.0,109.5 L1525.0,109.5 L1531.0,108.5 L1537.0,108.5 L1543.0,108.5 L1549.0,107.5 L1555.0,107.5 L1561.0,107.5 L1567.0,107.5 L1573.0,107.5 L1579.0,107.5 L1585.0,107.5 L1591.0,107.5 L1597.0,107.5 L1603.0,107.5 L1609.0,107.5 L1615.0,107.5 L1621.0,107.5 L1627.0,107.5 L1633.0,107.5 L1639.0,107.5 L1645.0,107.5 L1651.0,107.5 L1657.0,107.5 L1663.0,107.5 L1669.0,106.5 L1675.0,106.5 L1681.0,106.5 L1687.0,105.5 L1693.0,105.5 L1699.0,105.5 L1705.0,105.5 L1711.0,104.5 L1717.0,104.5 L1723.0,104.5 L1729.0,104.5 L1735.0,103.5 L1741.0,103.5 L1747.0,103.5 L1753.0,102.5 L1759.0,102.5 L1765.0,102.5 L1771.0,102.5 L1777.0,101.5 L1783.0,101.5 L1789.0,101.5 L1795.0,101.5 L1801.0,101.5 L1807.0,101.5 L1813.0,101.5 L1819.0,101.5 L1825.0,101.5 L1831.0,101.5 L1837.0,102.5 L1843.0,102.5 L1849.0,102.5 L1854.0,102.5" stroke="#00ff00"/><path d="M42.1,423.3 L55.0,423.0 L64.0,421.5 L72.0,420.0 L82.0,417.5 L90.0,415.5 L99.0,413.0 L105.6,411.3 L107.6,413.3 L117.2,413.3 L123.8,410.4 L125.8,413.3 L135.3,413.3 L141.9,409.8 L143.9,413.3 L153.4,413.3 L160.0,409.1 L162.0,413.3 L171.5,413.3 L178.2,408.5 L180.2,413.3 L189.6,413.3 L196.3,407.9 L198.3,413.3 L207.7,413.3 L214.5,407.3 L216.5,413.3 L225.8,413.3 L232.6,406.6 L234.6,413.3 L243.9,413.3 L250.8,405.1 L253.1,413.3 L262.0,413.3 L268.9,404.3 L271.4,413.3 L280.1,413.3 L287.1,403.5 L289.8,413.3 L298.2,413.3 L305.2,403.0 L308.1,413.3 L316.3,413.3 L323.4,402.4 L326.4,413.3 L334.4,413.3 L341.5,401.9 L344.7,413.3 L352.5,413.3 L359.7,401.4 L363.0,413.3 L370.6,413.3 L377.9,400.5 L381.4,413.3 L388.7,413.3 L396.0,399.6 L399.8,413.3 L406.8,413.3 L414.1,398.6 L418.2,413.3 L424.9,413.3 L432.3,398.0 L436.5,413.3 L443.0,413.3 L450.4,397.5 L454.8,413.3 L461.1,413.3 L468.6,396.9 L473.2,413.3 L479.2,413.3 L486.8,396.4 L491.5,413.3 L497.3,413.3 L504.9,395.8 L509.8,413.3 L515.4,413.3 L523.0,395.2 L528.1,413.3 L533.5,413.3 L541.2,394.7 L546.4,413.3 L551.6,413.3 L559.3,394.1 L564.7,413.3 L569.7,413.3 L577.5,393.5 L583.0,413.3 L587.8,413.3 L595.6,393.0 L601.3,413.3 L605.9,413.3 L613.8,392.4 L619.6,413.3 L624.0,413.3 L631.9,391.8 L637.9,413.3 L642.1,413.3 L650.1,391.3 L656.2,413.3 L660.2,413.3 L668.2,390.7 L674.5,413.3 L678.3,413.3 L686.4,390.1 L692.8,413.3 L696.4,413.3 L704.5,389.6 L711.1,413.3 L714.5,413.3 L722.7,389.0 L729.5,413.3 L732.6,413.3 L740.9,388.2 L747.8,413.3 L750.7,413.3 L759.0,387.5 L766.2,413.3 L768.8,413.3 L777.1,386.7 L784.5,413.3 L786.9,413.3 L795.3,385.9 L802.9,413.3 L805.0,413.3 L813.4,385.2 L821.3,413.3 L823.1,413.3 L831.6,384.4 L839.6,413.3 L841.2,413.3 L849.8,383.6 L858.0,413.3 L859.3,413.3 L867.9,382.9 L876.4,413.3 L877.4,413.3 L886.0,382.1 L894.7,413.3 L895.5,413.3 L904.2,381.3 L913.1,413.3 L913.6,413.3 L922.3,380.6 L931.3,413.3 L931.7,413.3 L940.5,380.0 L949.5,413.3 L949.8,413.3 L958.6,379.4 L967.6,413.3 L967.9,413.3 L976.8,378.8 L985.8,413.3 L986.0,413.3 L994.9,378.2 L1003.9,413.3 L1004.1,413.3 L1013.1,377.6 L1022.1,413.3 L1022.2,413.3 L1031.2,377.0 L1039.3,413.1 L1067.3,294.2 L1076.3,334.9 L1085.4,300.6 L1094.4,341.0 L1112.5,265.5 L1121.5,306.2 L1130.6,270.5 L1139.6,311.2 L1148.6,276.6 L1157.7,318.4 L1166.7,282.3 L1175.7,323.2 L1184.8,287.5 L1193.8,328.6 L1202.9,293.6 L1211.9,334.9 L1230.0,256.5 L1239.0,297.2 L1248.0,261.5 L1257.1,303.3 L1266.1,266.7 L1275.2,308.2 L1284.2,272.1 L1293.2,313.0 L1302.3,276.6 L1311.3,317.3 L1320.8,282.3 L1330.1,322.5 L1339.1,287.5 L1348.1,327.7 L1357.2,291.5 L1366.2,332.6 L1384.3,252.4 L1393.3,294.2 L1402.4,258.5 L1411.4,298.3 L1420.5,262.6 L1429.5,304.0 L1438.5,267.6 L1447.6,307.1 L1456.9,272.1 L1466.0,312.8 L1475.0,276.2 L1484.1,316.8 L1493.1,280.7 L1502.1,321.3 L1511.2,285.6 L1520.2,325.2 L1529.3,288.6 L1538.3,329.3 L1547.3,293.6 L1556.4,334.9 L1574.4,253.6 L1583.5,294.9 L1592.5,256.5 L1601.6,299.2 L1611.0,261.5 L1619.6,302.1 L1629.1,265.5 L1638.2,305.5 L1647.2,269.4 L1656.2,309.4 L1665.3,272.8 L1674.3,314.1 L1683.4,275.7 L1692.4,316.4 L1701.4,280.7 L1710.5,320.2 L1719.5,282.9 L1728.5,324.1 L1737.6,287.0 L1746.6,327.0 L1755.7,290.4 L1764.7,330.4 L1773.7,293.6 L1782.8,333.8 L1800.9,251.7 L1809.9,292.4 L1819.0,254.7 L1828.0,295.8 L1837.0,257.4 L1846.1,298.1 L1854.2,266.0" stroke="#ff0000"/></g><path d="M12,523h1v1h-1zM30,523h1v1h-1zM47,523h1v1h-1zM65,523h1v1h-1zM83,523h1v1h-1zM100,523h1v1h-1zM118,523h1v1h-1zM136,523h1v1h-1zM153,523h1v1h-1zM171,523h1v1h-1zM188,523h1v1h-1zM206,523h1v1h-1zM224,523h1v1h-1zM241,523h1v1h-1zM259,523h1v1h-1zM277,523h1v1h-1zM294,523h1v1h-1zM312,523h1v1h-1zM329,523h1v1h-1zM347,523h1v1h-1zM365,523h1v1h-1zM382,523h1v1h-1zM400,523h1v1h-1zM418,523h1v1h-1zM435,523h1v1h-1zM453,523h1v1h-1zM471,523h1v1h-1zM488,523h1v1h-1zM506,523h1v1h-1zM523,523h1v1h-1zM541,523h1v1h-1zM559,523h1v1h-1zM576,523h1v1h-1zM594,523h1v1h-1zM612,523h1v1h-1zM629,523h1v1h-1zM647,523h1v1h-1zM664,523h1v1h-1zM682,523h1v1h-1zM700,523h1v1h-1zM717,523h1v1h-1zM735,523h1v1h-1zM753,523h1v1h-1zM770,523h1v1h-1zM788,523h1v1h-1zM806,523h1v1h-1zM823,523h1v1h-1zM841,523h1v1h-1zM858,523h1v1h-1zM876,523h1v1h-1zM894,523h1v1h-1zM911,523h1v1h-1zM929,523h1v1h-1zM947,523h1v1h-1zM964,523h1v1h-1zM982,523h1v1h-1zM999,523h1v1h-1zM1017,523h1v1h-1zM1035,523h1v1h-1zM1052,523h1v1h-1zM1070,523h1v1h-1zM1088,523h1v1h-1zM1105,523h1v1h-1zM1123,523h1v1h-1zM1141,523h1v1h-1zM1158,523h1v1h-1zM1176,523h1v1h-1zM1193,523h1v1h-1zM1211,523h1v1h-1zM1229,523h1v1h-1zM1246,523h1v1h-1zM1264,523h1v1h-1zM1282,523h1v1h-1zM1299,523h1v1h-1zM1317,523h1v1h-1zM1334,523h1v1h-1zM1352,523h1v1h-1zM1370,523h1v1h-1zM1387,523h1v1h-1zM1405,523h1v1h-1zM1423,523h1v1h-1zM1440,523h1v1h-1zM1458,523h1v1h-1zM1475,523h1v1h-1zM1493,523h1v1h-1zM1511,523h1v1h-1zM1528,523h1v1h-1zM1546,523h1v1h-1zM1564,523h1v1h-1zM1581,523h1v1h-1zM1599,523h1v1h-1zM1617,523h1v1h-1zM1634,523h1v1h-1zM1652,523h1v1h-1zM1669,523h1v1h-1zM1687,523h1v1h-1zM1705,523h1v1h-1zM1722,523h1v1h-1zM1740,523h1v1h-1zM1758,523h1v1h-1zM1775,523h1v1h-1zM1793,523h1v1h-1zM1810,523h1v1h-1zM1828,523h1v1h-1zM1846,523h1v1h-1zM1863,523h1v1h-1zM1881,523h1v1h-1zM1899,523h1v1h-1zM12,540h1v1h-1zM30,540h1v1h-1zM47,540h1v1h-1zM65,540h1v1h-1zM83,540h1v1h-1zM100,540h1v1h-1zM118,540h1v1h-1zM136,540h1v1h-1zM153,540h1v1h-1zM171,540h1v1h-1zM188,540h1v1h-1zM206,540h1v1h-1zM224,540h1v1h-1zM241,540h1v1h-1zM259,540h1v1h-1zM277,540h1v1h-1zM294,540h1v1h-1zM312,540h1v1h-1zM329,540h1v1h-1zM347,540h1v1h-1zM365,540h1v1h-1zM382,540h1v1h-1zM400,540h1v1h-1zM418,540h1v1h-1zM435,540h1v1h-1zM453,540h1v1h-1zM471,540h1v1h-1zM488,540h1v1h-1zM506,540h1v1h-1zM523,540h1v1h-1zM541,540h1v1h-1zM559,540h1v1h-1zM576,540h1v1h-1zM594,540h1v1h-1zM612,540h1v1h-1zM629,540h1v1h-1zM647,540h1v1h-1zM664,540h1v1h-1zM682,540h1v1h-1zM700,540h1v1h-1zM717,540h1v1h-1zM735,540h1v1h-1zM753,540h1v1h-1zM770,540h1v1h-1zM788,540h1v1h-1zM806,540h1v1h-1zM823,540h1v1h-1zM841,540h1v1h-1zM858,540h1v1h-1zM876,540h1v1h-1zM894,540h1v1h-1zM911,540h1v1h-1zM929,540h1v1h-1zM947,540h1v1h-1zM964,540h1v1h-1zM982,540h1v1h-1zM999,540h1v1h-1zM1017,540h1v1h-1zM1035,540h1v1h-1zM1052,540h1v1h-1zM1070,540h1v1h-1zM1088,540h1v1h-1zM1105,540h1v1h-1zM1123,540h1v1h-1zM1141,540h1v1h-1zM1158,540h1v1h-1zM1176,540h1v1h-1zM1193,540h1v1h-1zM1211,540h1v1h-1zM1229,540h1v1h-1zM1246,540h1v1h-1zM1264,540h1v1h-1zM1282,540h1v1h-1zM1299,540h1v1h-1zM1317,540h1v1h-1zM1334,540h1v1h-1zM1352,540h1v1h-1zM1370,540h1v1h-1zM1387,540h1v1h-1zM1405,540h1v1h-1zM1423,540h1v1h-1zM1440,540h1v1h-1zM1458,540h1v1h-1zM1475,540h1v1h-1zM1493,540h1v1h-1zM1511,540h1v1h-1zM1528,540h1v1h-1zM1546,540h1v1h-1zM1564,540h1v1h-1zM1581,540h1v1h-1zM1599,540h1v1h-1zM1617,540h1v1h-1zM1634,540h1v1h-1zM1652,540h1v1h-1zM1669,540h1v1h-1zM1687,540h1v1h-1zM1705,540h1v1h-1zM1722,540h1v1h-1zM1740,540h1v1h-1zM1758,540h1v1h-1zM1775,540h1v1h-1zM1793,540h1v1h-1zM1810,540h1v1h-1zM1828,540h1v1h-1zM1846,540h1v1h-1zM1863,540h1v1h-1zM1881,540h1v1h-1zM1899,540h1v1h-1zM12,558h1v1h-1zM30,558h1v1h-1zM47,558h1v1h-1zM65,558h1v1h-1zM83,558h1v1h-1zM100,558h1v1h-1zM118,558h1v1h-1zM136,558h1v1h-1zM153,558h1v1h-1zM171,558h1v1h-1zM188,558h1v1h-1zM206,558h1v1h-1zM224,558h1v1h-1zM241,558h1v1h-1zM259,558h1v1h-1zM277,558h1v1h-1zM294,558h1v1h-1zM312,558h1v1h-1zM329,558h1v1h-1zM347,558h1v1h-1zM365,558h1v1h-1zM382,558h1v1h-1zM400,558h1v1h-1zM418,558h1v1h-1zM435,558h1v1h-1zM453,558h1v1h-1zM471,558h1v1h-1zM488,558h1v1h-1zM506,558h1v1h-1zM523,558h1v1h-1zM541,558h1v1h-1zM559,558h1v1h-1zM576,558h1v1h-1zM594,558h1v1h-1zM612,558h1v1h-1zM629,558h1v1h-1zM647,558h1v1h-1zM664,558h1v1h-1zM682,558h1v1h-1zM700,558h1v1h-1zM717,558h1v1h-1zM735,558h1v1h-1zM753,558h1v1h-1zM770,558h1v1h-1zM788,558h1v1h-1zM806,558h1v1h-1zM823,558h1v1h-1zM841,558h1v1h-1zM858,558h1v1h-1zM876,558h1v1h-1zM894,558h1v1h-1zM911,558h1v1h-1zM929,558h1v1h-1zM947,558h1v1h-1zM964,558h1v1h-1zM982,558h1v1h-1zM999,558h1v1h-1zM1017,558h1v1h-1zM1035,558h1v1h-1zM1052,558h1v1h-1zM1070,558h1v1h-1zM1088,558h1v1h-1zM1105,558h1v1h-1zM1123,558h1v1h-1zM1141,558h1v1h-1zM1158,558h1v1h-1zM1176,558h1v1h-1zM1193,558h1v1h-1zM1211,558h1v1h-1zM1229,558h1v1h-1zM1246,558h1v1h-1zM1264,558h1v1h-1zM1282,558h1v1h-1zM1299,558h1v1h-1zM1317,558h1v1h-1zM1334,558h1v1h-1zM1352,558h1v1h-1zM1370,558h1v1h-1zM1387,558h1v1h-1zM1405,558h1v1h-1zM1423,558h1v1h-1zM1440,558h1v1h-1zM1458,558h1v1h-1zM1475,558h1v1h-1zM1493,558h1v1h-1zM1511,558h1v1h-1zM1528,558h1v1h-1zM1546,558h1v1h-1zM1564,558h1v1h-1zM1581,558h1v1h-1zM1599,558h1v1h-1zM1617,558h1v1h-1zM1634,558h1v1h-1zM1652,558h1v1h-1zM1669,558h1v1h-1zM1687,558h1v1h-1zM1705,558h1v1h-1zM1722,558h1v1h-1zM1740,558h1v1h-1zM1758,558h1v1h-1zM1775,558h1v1h-1zM1793,558h1v1h-1zM1810,558h1v1h-1zM1828,558h1v1h-1zM1846,558h1v1h-1zM1863,558h1v1h-1zM1881,558h1v1h-1zM1899,558h1v1h-1zM12,575h1v1h-1zM30,575h1v1h-1zM47,575h1v1h-1zM65,575h1v1h-1zM83,575h1v1h-1zM100,575h1v1h-1zM118,575h1v1h-1zM136,575h1v1h-1zM153,575h1v1h-1zM171,575h1v1h-1zM188,575h1v1h-1zM206,575h1v1h-1zM224,575h1v1h-1zM241,575h1v1h-1zM259,575h1v1h-1zM277,575h1v1h-1zM294,575h1v1h-1zM312,575h1v1h-1zM329,575h1v1h-1zM347,575h1v1h-1zM365,575h1v1h-1zM382,575h1v1h-1zM400,575h1v1h-1zM418,575h1v1h-1zM435,575h1v1h-1zM453,575h1v1h-1zM471,575h1v1h-1zM488,575h1v1h-1zM506,575h1v1h-1zM523,575h1v1h-1zM541,575h1v1h-1zM559,575h1v1h-1zM576,575h1v1h-1zM594,575h1v1h-1zM612,575h1v1h-1zM629,575h1v1h-1zM647,575h1v1h-1zM664,575h1v1h-1zM682,575h1v1h-1zM700,575h1v1h-1zM717,575h1v1h-1zM735,575h1v1h-1zM753,575h1v1h-1zM770,575h1v1h-1zM788,575h1v1h-1zM806,575h1v1h-1zM823,575h1v1h-1zM841,575h1v1h-1zM858,575h1v1h-1zM876,575h1v1h-1zM894,575h1v1h-1zM911,575h1v1h-1zM929,575h1v1h-1zM947,575h1v1h-1zM964,575h1v1h-1zM982,575h1v1h-1zM999,575h1v1h-1zM1017,575h1v1h-1zM1035,575h1v1h-1zM1052,575h1v1h-1zM1070,575h1v1h-1zM1088,575h1v1h-1zM1105,575h1v1h-1zM1123,575h1v1h-1zM1141,575h1v1h-1zM1158,575h1v1h-1zM1176,575h1v1h-1zM1193,575h1v1h-1zM1211,575h1v1h-1zM1229,575h1v1h-1zM1246,575h1v1h-1zM1264,575h1v1h-1zM1282,575h1v1h-1zM1299,575h1v1h-1zM1317,575h1v1h-1zM1334,575h1v1h-1zM1352,575h1v1h-1zM1370,575h1v1h-1zM1387,575h1v1h-1zM1405,575h1v1h-1zM1423,575h1v1h-1zM1440,575h1v1h-1zM1458,575h1v1h-1zM1475,575h1v1h-1zM1493,575h1v1h-1zM1511,575h1v1h-1zM1528,575h1v1h-1zM1546,575h1v1h-1zM1564,575h1v1h-1zM1581,575h1v1h-1zM1599,575h1v1h-1zM1617,575h1v1h-1zM1634,575h1v1h-1zM1652,575h1v1h-1zM1669,575h1v1h-1zM1687,575h1v1h-1zM1705,575h1v1h-1zM1722,575h1v1h-1zM1740,575h1v1h-1zM1758,575h1v1h-1zM1775,575h1v1h-1zM1793,575h1v1h-1zM1810,575h1v1h-1zM1828,575h1v1h-1zM1846,575h1v1h-1zM1863,575h1v1h-1zM1881,575h1v1h-1zM1899,575h1v1h-1zM12,593h1v1h-1zM30,593h1v1h-1zM47,593h1v1h-1zM65,593h1v1h-1zM83,593h1v1h-1zM100,593h1v1h-1zM118,593h1v1h-1zM136,593h1v1h-1zM153,593h1v1h-1zM171,593h1v1h-1zM188,593h1v1h-1zM206,593h1v1h-1zM224,593h1v1h-1zM241,593h1v1h-1zM259,593h1v1h-1zM277,593h1v1h-1zM294,593h1v1h-1zM312,593h1v1h-1zM329,593h1v1h-1zM347,593h1v1h-1zM365,593h1v1h-1zM382,593h1v1h-1zM400,593h1v1h-1zM418,593h1v1h-1zM435,593h1v1h-1zM453,593h1v1h-1zM471,593h1v1h-1zM488,593h1v1h-1zM506,593h1v1h-1zM523,593h1v1h-1zM541,593h1v1h-1zM559,593h1v1h-1zM576,593h1v1h-1zM594,593h1v1h-1zM612,593h1v1h-1zM629,593h1v1h-1zM647,593h1v1h-1zM664,593h1v1h-1zM682,593h1v1h-1zM700,593h1v1h-1zM717,593h1v1h-1zM735,593h1v1h-1zM753,593h1v1h-1zM770,593h1v1h-1zM788,593h1v1h-1zM806,593h1v1h-1zM823,593h1v1h-1zM841,593h1v1h-1zM858,593h1v1h-1zM876,593h1v1h-1zM894,593h1v1h-1zM911,593h1v1h-1zM929,593h1v1h-1zM947,593h1v1h-1zM964,593h1v1h-1zM982,593h1v1h-1zM999,593h1v1h-1zM1017,593h1v1h-1zM1035,593h1v1h-1zM1052,593h1v1h-1zM1070,593h1v1h-1zM1088,593h1v1h-1zM1105,593h1v1h-1zM1123,593h1v1h-1zM1141,593h1v1h-1zM1158,593h1v1h-1zM1176,593h1v1h-1zM1193,593h1v1h-1zM1211,593h1v1h-1zM1229,593h1v1h-1zM1246,593h1v1h-1zM1264,593h1v1h-1zM1282,593h1v1h-1zM1299,593h1v1h-1zM1317,593h1v1h-1zM1334,593h1v1h-1zM1352,593h1v1h-1zM1370,593h1v1h-1zM1387,593h1v1h-1zM1405,593h1v1h-1zM1423,593h1v1h-1zM1440,593h1v1h-1zM1458,593h1v1h-1zM1475,593h1v1h-1zM1493,593h1v1h-1zM1511,593h1v1h-1zM1528,593h1v1h-1zM1546,593h1v1h-1zM1564,593h1v1h-1zM1581,593h1v1h-1zM1599,593h1v1h-1zM1617,593h1v1h-1zM1634,593h1v1h-1zM1652,593h1v1h-1zM1669,593h1v1h-1zM1687,593h1v1h-1zM1705,593h1v1h-1zM1722,593h1v1h-1zM1740,593h1v1h-1zM1758,593h1v1h-1zM1775,593h1v1h-1zM1793,593h1v1h-1zM1810,593h1v1h-1zM1828,593h1v1h-1zM1846,593h1v1h-1zM1863,593h1v1h-1zM1881,593h1v1h-1zM1899,593h1v1h-1zM12,611h1v1h-1zM30,611h1v1h-1zM47,611h1v1h-1zM65,611h1v1h-1zM83,611h1v1h-1zM100,611h1v1h-1zM118,611h1v1h-1zM136,611h1v1h-1zM153,611h1v1h-1zM171,611h1v1h-1zM188,611h1v1h-1zM206,611h1v1h-1zM224,611h1v1h-1zM241,611h1v1h-1zM259,611h1v1h-1zM277,611h1v1h-1zM294,611h1v1h-1zM312,611h1v1h-1zM329,611h1v1h-1zM347,611h1v1h-1zM365,611h1v1h-1zM382,611h1v1h-1zM400,611h1v1h-1zM418,611h1v1h-1zM435,611h1v1h-1zM453,611h1v1h-1zM471,611h1v1h-1zM488,611h1v1h-1zM506,611h1v1h-1zM523,611h1v1h-1zM541,611h1v1h-1zM559,611h1v1h-1zM576,611h1v1h-1zM594,611h1v1h-1zM612,611h1v1h-1zM629,611h1v1h-1zM647,611h1v1h-1zM664,611h1v1h-1zM682,611h1v1h-1zM700,611h1v1h-1zM717,611h1v1h-1zM735,611h1v1h-1zM753,611h1v1h-1zM770,611h1v1h-1zM788,611h1v1h-1zM806,611h1v1h-1zM823,611h1v1h-1zM841,611h1v1h-1zM858,611h1v1h-1zM876,611h1v1h-1zM894,611h1v1h-1zM911,611h1v1h-1zM929,611h1v1h-1zM947,611h1v1h-1zM964,611h1v1h-1zM982,611h1v1h-1zM999,611h1v1h-1zM1017,611h1v1h-1zM1035,611h1v1h-1zM1052,611h1v1h-1zM1070,611h1v1h-1zM1088,611h1v1h-1zM1105,611h1v1h-1zM1123,611h1v1h-1zM1141,611h1v1h-1zM1158,611h1v1h-1zM1176,611h1v1h-1zM1193,611h1v1h-1zM1211,611h1v1h-1zM1229,611h1v1h-1zM1246,611h1v1h-1zM1264,611h1v1h-1zM1282,611h1v1h-1zM1299,611h1v1h-1zM1317,611h1v1h-1zM1334,611h1v1h-1zM1352,611h1v1h-1zM1370,611h1v1h-1zM1387,611h1v1h-1zM1405,611h1v1h-1zM1423,611h1v1h-1zM1440,611h1v1h-1zM1458,611h1v1h-1zM1475,611h1v1h-1zM1493,611h1v1h-1zM1511,611h1v1h-1zM1528,611h1v1h-1zM1546,611h1v1h-1zM1564,611h1v1h-1zM1581,611h1v1h-1zM1599,611h1v1h-1zM1617,611h1v1h-1zM1634,611h1v1h-1zM1652,611h1v1h-1zM1669,611h1v1h-1zM1687,611h1v1h-1zM1705,611h1v1h-1zM1722,611h1v1h-1zM1740,611h1v1h-1zM1758,611h1v1h-1zM1775,611h1v1h-1zM1793,611h1v1h-1zM1810,611h1v1h-1zM1828,611h1v1h-1zM1846,611h1v1h-1zM1863,611h1v1h-1zM1881,611h1v1h-1zM1899,611h1v1h-1zM12,628h1v1h-1zM30,628h1v1h-1zM47,628h1v1h-1zM65,628h1v1h-1zM83,628h1v1h-1zM100,628h1v1h-1zM118,628h1v1h-1zM136,628h1v1h-1zM153,628h1v1h-1zM171,628h1v1h-1zM188,628h1v1h-1zM206,628h1v1h-1zM224,628h1v1h-1zM241,628h1v1h-1zM259,628h1v1h-1zM277,628h1v1h-1zM294,628h1v1h-1zM312,628h1v1h-1zM329,628h1v1h-1zM347,628h1v1h-1zM365,628h1v1h-1zM382,628h1v1h-1zM400,628h1v1h-1zM418,628h1v1h-1zM435,628h1v1h-1zM453,628h1v1h-1zM471,628h1v1h-1zM488,628h1v1h-1zM506,628h1v1h-1zM523,628h1v1h-1zM541,628h1v1h-1zM559,628h1v1h-1zM576,628h1v1h-1zM594,628h1v1h-1zM612,628h1v1h-1zM629,628h1v1h-1zM647,628h1v1h-1zM664,628h1v1h-1zM682,628h1v1h-1zM700,628h1v1h-1zM717,628h1v1h-1zM735,628h1v1h-1zM753,628h1v1h-1zM770,628h1v1h-1zM788,628h1v1h-1zM806,628h1v1h-1zM823,628h1v1h-1zM841,628h1v1h-1zM858,628h1v1h-1zM876,628h1v1h-1zM894,628h1v1h-1zM911,628h1v1h-1zM929,628h1v1h-1zM947,628h1v1h-1zM964,628h1v1h-1zM982,628h1v1h-1zM999,628h1v1h-1zM1017,628h1v1h-1zM1035,628h1v1h-1zM1052,628h1v1h-1zM1070,628h1v1h-1zM1088,628h1v1h-1zM1105,628h1v1h-1zM1123,628h1v1h-1zM1141,628h1v1h-1zM1158,628h1v1h-1zM1176,628h1v1h-1zM1193,628h1v1h-1zM1211,628h1v1h-1zM1229,628h1v1h-1zM1246,628h1v1h-1zM1264,628h1v1h-1zM1282,628h1v1h-1zM1299,628h1v1h-1zM1317,628h1v1h-1zM1334,628h1v1h-1zM1352,628h1v1h-1zM1370,628h1v1h-1zM1387,628h1v1h-1zM1405,628h1v1h-1zM1423,628h1v1h-1zM1440,628h1v1h-1zM1458,628h1v1h-1zM1475,628h1v1h-1zM1493,628h1v1h-1zM1511,628h1v1h-1zM1528,628h1v1h-1zM1546,628h1v1h-1zM1564,628h1v1h-1zM1581,628h1v1h-1zM1599,628h1v1h-1zM1617,628h1v1h-1zM1634,628h1v1h-1zM1652,628h1v1h-1zM1669,628h1v1h-1zM1687,628h1v1h-1zM1705,628h1v1h-1zM1722,628h1v1h-1zM1740,628h1v1h-1zM1758,628h1v1h-1zM1775,628h1v1h-1zM1793,628h1v1h-1zM1810,628h1v1h-1zM1828,628h1v1h-1zM1846,628h1v1h-1zM1863,628h1v1h-1zM1881,628h1v1h-1zM1899,628h1v1h-1zM12,646h1v1h-1zM30,646h1v1h-1zM47,646h1v1h-1zM65,646h1v1h-1zM83,646h1v1h-1zM100,646h1v1h-1zM118,646h1v1h-1zM136,646h1v1h-1zM153,646h1v1h-1zM171,646h1v1h-1zM188,646h1v1h-1zM206,646h1v1h-1zM224,646h1v1h-1zM241,646h1v1h-1zM259,646h1v1h-1zM277,646h1v1h-1zM294,646h1v1h-1zM312,646h1v1h-1zM329,646h1v1h-1zM347,646h1v1h-1zM365,646h1v1h-1zM382,646h1v1h-1zM400,646h1v1h-1zM418,646h1v1h-1zM435,646h1v1h-1zM453,646h1v1h-1zM471,646h1v1h-1zM488,646h1v1h-1zM506,646h1v1h-1zM523,646h1v1h-1zM541,646h1v1h-1zM559,646h1v1h-1zM576,646h1v1h-1zM594,646h1v1h-1zM612,646h1v1h-1zM629,646h1v1h-1zM647,646h1v1h-1zM664,646h1v1h-1zM682,646h1v1h-1zM700,646h1v1h-1zM717,646h1v1h-1zM735,646h1v1h-1zM753,646h1v1h-1zM770,646h1v1h-1zM788,646h1v1h-1zM806,646h1v1h-1zM823,646h1v1h-1zM841,646h1v1h-1zM858,646h1v1h-1zM876,646h1v1h-1zM894,646h1v1h-1zM911,646h1v1h-1zM929,646h1v1h-1zM947,646h1v1h-1zM964,646h1v1h-1zM982,646h1v1h-1zM999,646h1v1h-1zM1017,646h1v1h-1zM1035,646h1v1h-1zM1052,646h1v1h-1zM1070,646h1v1h-1zM1088,646h1v1h-1zM1105,646h1v1h-1zM1123,646h1v1h-1zM1141,646h1v1h-1zM1158,646h1v1h-1zM1176,646h1v1h-1zM1193,646h1v1h-1zM1211,646h1v1h-1zM1229,646h1v1h-1zM1246,646h1v1h-1zM1264,646h1v1h-1zM1282,646h1v1h-1zM1299,646h1v1h-1zM1317,646h1v1h-1zM1334,646h1v1h-1zM1352,646h1v1h-1zM1370,646h1v1h-1zM1387,646h1v1h-1zM1405,646h1v1h-1zM1423,646h1v1h-1zM1440,646h1v1h-1zM1458,646h1v1h-1zM1475,646h1v1h-1zM1493,646h1v1h-1zM1511,646h1v1h-1zM1528,646h1v1h-1zM1546,646h1v1h-1zM1564,646h1v1h-1zM1581,646h1v1h-1zM1599,646h1v1h-1zM1617,646h1v1h-1zM1634,646h1v1h-1zM1652,646h1v1h-1zM1669,646h1v1h-1zM1687,646h1v1h-1zM1705,646h1v1h-1zM1722,646h1v1h-1zM1740,646h1v1h-1zM1758,646h1v1h-1zM1775,646h1v1h-1zM1793,646h1v1h-1zM1810,646h1v1h-1zM1828,646h1v1h-1zM1846,646h1v1h-1zM1863,646h1v1h-1zM1881,646h1v1h-1zM1899,646h1v1h-1zM12,664h1v1h-1zM30,664h1v1h-1zM47,664h1v1h-1zM65,664h1v1h-1zM83,664h1v1h-1zM100,664h1v1h-1zM118,664h1v1h-1zM136,664h1v1h-1zM153,664h1v1h-1zM171,664h1v1h-1zM188,664h1v1h-1zM206,664h1v1h-1zM224,664h1v1h-1zM241,664h1v1h-1zM259,664h1v1h-1zM277,664h1v1h-1zM294,664h1v1h-1zM312,664h1v1h-1zM329,664h1v1h-1zM347,664h1v1h-1zM365,664h1v1h-1zM382,664h1v1h-1zM400,664h1v1h-1zM418,664h1v1h-1zM435,664h1v1h-1zM453,664h1v1h-1zM471,664h1v1h-1zM488,664h1v1h-1zM506,664h1v1h-1zM523,664h1v1h-1zM541,664h1v1h-1zM559,664h1v1h-1zM576,664h1v1h-1zM594,664h1v1h-1zM612,664h1v1h-1zM629,664h1v1h-1zM647,664h1v1h-1zM664,664h1v1h-1zM682,664h1v1h-1zM700,664h1v1h-1zM717,664h1v1h-1zM735,664h1v1h-1zM753,664h1v1h-1zM770,664h1v1h-1zM788,664h1v1h-1zM806,664h1v1h-1zM823,664h1v1h-1zM841,664h1v1h-1zM858,664h1v1h-1zM876,664h1v1h-1zM894,664h1v1h-1zM911,664h1v1h-1zM929,664h1v1h-1zM947,664h1v1h-1zM964,664h1v1h-1zM982,664h1v1h-1zM999,664h1v1h-1zM1017,664h1v1h-1zM1035,664h1v1h-1zM1052,664h1v1h-1zM1070,664h1v1h-1zM1088,664h1v1h-1zM1105,664h1v1h-1zM1123,664h1v1h-1zM1141,664h1v1h-1zM1158,664h1v1h-1zM1176,664h1v1h-1zM1193,664h1v1h-1zM1211,664h1v1h-1zM1229,664h1v1h-1zM1246,664h1v1h-1zM1264,664h1v1h-1zM1282,664h1v1h-1zM1299,664h1v1h-1zM1317,664h1v1h-1zM1334,664h1v1h-1zM1352,664h1v1h-1zM1370,664h1v1h-1zM1387,664h1v1h-1zM1405,664h1v1h-1zM1423,664h1v1h-1zM1440,664h1v1h-1zM1458,664h1v1h-1zM1475,664h1v1h-1zM1493,664h1v1h-1zM1511,664h1v1h-1zM1528,664h1v1h-1zM1546,664h1v1h-1zM1564,664h1v1h-1zM1581,664h1v1h-1zM1599,664h1v1h-1zM1617,664h1v1h-1zM1634,664h1v1h-1zM1652,664h1v1h-1zM1669,664h1v1h-1zM1687,664h1v1h-1zM1705,664h1v1h-1zM1722,664h1v1h-1zM1740,664h1v1h-1zM1758,664h1v1h-1zM1775,664h1v1h-1zM1793,664h1v1h-1zM1810,664h1v1h-1zM1828,664h1v1h-1zM1846,664h1v1h-1zM1863,664h1v1h-1zM1881,664h1v1h-1zM1899,664h1v1h-1zM12,681h1v1h-1zM30,681h1v1h-1zM47,681h1v1h-1zM65,681h1v1h-1zM83,681h1v1h-1zM100,681h1v1h-1zM118,681h1v1h-1zM136,681h1v1h-1zM153,681h1v1h-1zM171,681h1v1h-1zM188,681h1v1h-1zM206,681h1v1h-1zM224,681h1v1h-1zM241,681h1v1h-1zM259,681h1v1h-1zM277,681h1v1h-1zM294,681h1v1h-1zM312,681h1v1h-1zM329,681h1v1h-1zM347,681h1v1h-1zM365,681h1v1h-1zM382,681h1v1h-1zM400,681h1v1h-1zM418,681h1v1h-1zM435,681h1v1h-1zM453,681h1v1h-1zM471,681h1v1h-1zM488,681h1v1h-1zM506,681h1v1h-1zM523,681h1v1h-1zM541,681h1v1h-1zM559,681h1v1h-1zM576,681h1v1h-1zM594,681h1v1h-1zM612,681h1v1h-1zM629,681h1v1h-1zM647,681h1v1h-1zM664,681h1v1h-1zM682,681h1v1h-1zM700,681h1v1h-1zM717,681h1v1h-1zM735,681h1v1h-1zM753,681h1v1h-1zM770,681h1v1h-1zM788,681h1v1h-1zM806,681h1v1h-1zM823,681h1v1h-1zM841,681h1v1h-1zM858,681h1v1h-1zM876,681h1v1h-1zM894,681h1v1h-1zM911,681h1v1h-1zM929,681h1v1h-1zM947,681h1v1h-1zM964,681h1v1h-1zM982,681h1v1h-1zM999,681h1v1h-1zM1017,681h1v1h-1zM1035,681h1v1h-1zM1052,681h1v1h-1zM1070,681h1v1h-1zM1088,681h1v1h-1zM1105,681h1v1h-1zM1123,681h1v1h-1zM1141,681h1v1h-1zM1158,681h1v1h-1zM1176,681h1v1h-1zM1193,681h1v1h-1zM1211,681h1v1h-1zM1229,681h1v1h-1zM1246,681h1v1h-1zM1264,681h1v1h-1zM1282,681h1v1h-1zM1299,681h1v1h-1zM1317,681h1v1h-1zM1334,681h1v1h-1zM1352,681h1v1h-1zM1370,681h1v1h-1zM1387,681h1v1h-1zM1405,681h1v1h-1zM1423,681h1v1h-1zM1440,681h1v1h-1zM1458,681h1v1h-1zM1475,681h1v1h-1zM1493,681h1v1h-1zM1511,681h1v1h-1zM1528,681h1v1h-1zM1546,681h1v1h-1zM1564,681h1v1h-1zM1581,681h1v1h-1zM1599,681h1v1h-1zM1617,681h1v1h-1zM1634,681h1v1h-1zM1652,681h1v1h-1zM1669,681h1v1h-1zM1687,681h1v1h-1zM1705,681h1v1h-1zM1722,681h1v1h-1zM1740,681h1v1h-1zM1758,681h1v1h-1zM1775,681h1v1h-1zM1793,681h1v1h-1zM1810,681h1v1h-1zM1828,681h1v1h-1zM1846,681h1v1h-1zM1863,681h1v1h-1zM1881,681h1v1h-1zM1899,681h1v1h-1zM12,699h1v1h-1zM30,699h1v1h-1zM47,699h1v1h-1zM65,699h1v1h-1zM83,699h1v1h-1zM100,699h1v1h-1zM118,699h1v1h-1zM136,699h1v1h-1zM153,699h1v1h-1zM171,699h1v1h-1zM188,699h1v1h-1zM206,699h1v1h-1zM224,699h1v1h-1zM241,699h1v1h-1zM259,699h1v1h-1zM277,699h1v1h-1zM294,699h1v1h-1zM312,699h1v1h-1zM329,699h1v1h-1zM347,699h1v1h-1zM365,699h1v1h-1zM382,699h1v1h-1zM400,699h1v1h-1zM418,699h1v1h-1zM435,699h1v1h-1zM453,699h1v1h-1zM471,699h1v1h-1zM488,699h1v1h-1zM506,699h1v1h-1zM523,699h1v1h-1zM541,699h1v1h-1zM559,699h1v1h-1zM576,699h1v1h-1zM594,699h1v1h-1zM612,699h1v1h-1zM629,699h1v1h-1zM647,699h1v1h-1zM664,699h1v1h-1zM682,699h1v1h-1zM700,699h1v1h-1zM717,699h1v1h-1zM735,699h1v1h-1zM753,699h1v1h-1zM770,699h1v1h-1zM788,699h1v1h-1zM806,699h1v1h-1zM823,699h1v1h-1zM841,699h1v1h-1zM858,699h1v1h-1zM876,699h1v1h-1zM894,699h1v1h-1zM911,699h1v1h-1zM929,699h1v1h-1zM947,699h1v1h-1zM964,699h1v1h-1zM982,699h1v1h-1zM999,699h1v1h-1zM1017,699h1v1h-1zM1035,699h1v1h-1zM1052,699h1v1h-1zM1070,699h1v1h-1zM1088,699h1v1h-1zM1105,699h1v1h-1zM1123,699h1v1h-1zM1141,699h1v1h-1zM1158,699h1v1h-1zM1176,699h1v1h-1zM1193,699h1v1h-1zM1211,699h1v1h-1zM1229,699h1v1h-1zM1246,699h1v1h-1zM1264,699h1v1h-1zM1282,699h1v1h-1zM1299,699h1v1h-1zM1317,699h1v1h-1zM1334,699h1v1h-1zM1352,699h1v1h-1zM1370,699h1v1h-1zM1387,699h1v1h-1zM1405,699h1v1h-1zM1423,699h1v1h-1zM1440,699h1v1h-1zM1458,699h1v1h-1zM1475,699h1v1h-1zM1493,699h1v1h-1zM1511,699h1v1h-1zM1528,699h1v1h-1zM1546,699h1v1h-1zM1564,699h1v1h-1zM1581,699h1v1h-1zM1599,699h1v1h-1zM1617,699h1v1h-1zM1634,699h1v1h-1zM1652,699h1v1h-1zM1669,699h1v1h-1zM1687,699h1v1h-1zM1705,699h1v1h-1zM1722,699h1v1h-1zM1740,699h1v1h-1zM1758,699h1v1h-1zM1775,699h1v1h-1zM1793,699h1v1h-1zM1810,699h1v1h-1zM1828,699h1v1h-1zM1846,699h1v1h-1zM1863,699h1v1h-1zM1881,699h1v1h-1zM1899,699h1v1h-1zM12,716h1v1h-1zM30,716h1v1h-1zM47,716h1v1h-1zM65,716h1v1h-1zM83,716h1v1h-1zM100,716h1v1h-1zM118,716h1v1h-1zM136,716h1v1h-1zM153,716h1v1h-1zM171,716h1v1h-1zM188,716h1v1h-1zM206,716h1v1h-1zM224,716h1v1h-1zM241,716h1v1h-1zM259,716h1v1h-1zM277,716h1v1h-1zM294,716h1v1h-1zM312,716h1v1h-1zM329,716h1v1h-1zM347,716h1v1h-1zM365,716h1v1h-1zM382,716h1v1h-1zM400,716h1v1h-1zM418,716h1v1h-1zM435,716h1v1h-1zM453,716h1v1h-1zM471,716h1v1h-1zM488,716h1v1h-1zM506,716h1v1h-1zM523,716h1v1h-1zM541,716h1v1h-1zM559,716h1v1h-1zM576,716h1v1h-1zM594,716h1v1h-1zM612,716h1v1h-1zM629,716h1v1h-1zM647,716h1v1h-1zM664,716h1v1h-1zM682,716h1v1h-1zM700,716h1v1h-1zM717,716h1v1h-1zM735,716h1v1h-1zM753,716h1v1h-1zM770,716h1v1h-1zM788,716h1v1h-1zM806,716h1v1h-1zM823,716h1v1h-1zM841,716h1v1h-1zM858,716h1v1h-1zM876,716h1v1h-1zM894,716h1v1h-1zM911,716h1v1h-1zM929,716h1v1h-1zM947,716h1v1h-1zM964,716h1v1h-1zM982,716h1v1h-1zM999,716h1v1h-1zM1017,716h1v1h-1zM1035,716h1v1h-1zM1052,716h1v1h-1zM1070,716h1v1h-1zM1088,716h1v1h-1zM1105,716h1v1h-1zM1123,716h1v1h-1zM1141,716h1v1h-1zM1158,716h1v1h-1zM1176,716h1v1h-1zM1193,716h1v1h-1zM1211,716h1v1h-1zM1229,716h1v1h-1zM1246,716h1v1h-1zM1264,716h1v1h-1zM1282,716h1v1h-1zM1299,716h1v1h-1zM1317,716h1v1h-1zM1334,716h1v1h-1zM1352,716h1v1h-1zM1370,716h1v1h-1zM1387,716h1v1h-1zM1405,716h1v1h-1zM1423,716h1v1h-1zM1440,716h1v1h-1zM1458,716h1v1h-1zM1475,716h1v1h-1zM1493,716h1v1h-1zM1511,716h1v1h-1zM1528,716h1v1h-1zM1546,716h1v1h-1zM1564,716h1v1h-1zM1581,716h1v1h-1zM1599,716h1v1h-1zM1617,716h1v1h-1zM1634,716h1v1h-1zM1652,716h1v1h-1zM1669,716h1v1h-1zM1687,716h1v1h-1zM1705,716h1v1h-1zM1722,716h1v1h-1zM1740,716h1v1h-1zM1758,716h1v1h-1zM1775,716h1v1h-1zM1793,716h1v1h-1zM1810,716h1v1h-1zM1828,716h1v1h-1zM1846,716h1v1h-1zM1863,716h1v1h-1zM1881,716h1v1h-1zM1899,716h1v1h-1zM12,734h1v1h-1zM30,734h1v1h-1zM47,734h1v1h-1zM65,734h1v1h-1zM83,734h1v1h-1zM100,734h1v1h-1zM118,734h1v1h-1zM136,734h1v1h-1zM153,734h1v1h-1zM171,734h1v1h-1zM188,734h1v1h-1zM206,734h1v1h-1zM224,734h1v1h-1zM241,734h1v1h-1zM259,734h1v1h-1zM277,734h1v1h-1zM294,734h1v1h-1zM312,734h1v1h-1zM329,734h1v1h-1zM347,734h1v1h-1zM365,734h1v1h-1zM382,734h1v1h-1zM400,734h1v1h-1zM418,734h1v1h-1zM435,734h1v1h-1zM453,734h1v1h-1zM471,734h1v1h-1zM488,734h1v1h-1zM506,734h1v1h-1zM523,734h1v1h-1zM541,734h1v1h-1zM559,734h1v1h-1zM576,734h1v1h-1zM594,734h1v1h-1zM612,734h1v1h-1zM629,734h1v1h-1zM647,734h1v1h-1zM664,734h1v1h-1zM682,734h1v1h-1zM700,734h1v1h-1zM717,734h1v1h-1zM735,734h1v1h-1zM753,734h1v1h-1zM770,734h1v1h-1zM788,734h1v1h-1zM806,734h1v1h-1zM823,734h1v1h-1zM841,734h1v1h-1zM858,734h1v1h-1zM876,734h1v1h-1zM894,734h1v1h-1zM911,734h1v1h-1zM929,734h1v1h-1zM947,734h1v1h-1zM964,734h1v1h-1zM982,734h1v1h-1zM999,734h1v1h-1zM1017,734h1v1h-1zM1035,734h1v1h-1zM1052,734h1v1h-1zM1070,734h1v1h-1zM1088,734h1v1h-1zM1105,734h1v1h-1zM1123,734h1v1h-1zM1141,734h1v1h-1zM1158,734h1v1h-1zM1176,734h1v1h-1zM1193,734h1v1h-1zM1211,734h1v1h-1zM1229,734h1v1h-1zM1246,734h1v1h-1zM1264,734h1v1h-1zM1282,734h1v1h-1zM1299,734h1v1h-1zM1317,734h1v1h-1zM1334,734h1v1h-1zM1352,734h1v1h-1zM1370,734h1v1h-1zM1387,734h1v1h-1zM1405,734h1v1h-1zM1423,734h1v1h-1zM1440,734h1v1h-1zM1458,734h1v1h-1zM1475,734h1v1h-1zM1493,734h1v1h-1zM1511,734h1v1h-1zM1528,734h1v1h-1zM1546,734h1v1h-1zM1564,734h1v1h-1zM1581,734h1v1h-1zM1599,734h1v1h-1zM1617,734h1v1h-1zM1634,734h1v1h-1zM1652,734h1v1h-1zM1669,734h1v1h-1zM1687,734h1v1h-1zM1705,734h1v1h-1zM1722,734h1v1h-1zM1740,734h1v1h-1zM1758,734h1v1h-1zM1775,734h1v1h-1zM1793,734h1v1h-1zM1810,734h1v1h-1zM1828,734h1v1h-1zM1846,734h1v1h-1zM1863,734h1v1h-1zM1881,734h1v1h-1zM1899,734h1v1h-1zM12,752h1v1h-1zM30,752h1v1h-1zM47,752h1v1h-1zM65,752h1v1h-1zM83,752h1v1h-1zM100,752h1v1h-1zM118,752h1v1h-1zM136,752h1v1h-1zM153,752h1v1h-1zM171,752h1v1h-1zM188,752h1v1h-1zM206,752h1v1h-1zM224,752h1v1h-1zM241,752h1v1h-1zM259,752h1v1h-1zM277,752h1v1h-1zM294,752h1v1h-1zM312,752h1v1h-1zM329,752h1v1h-1zM347,752h1v1h-1zM365,752h1v1h-1zM382,752h1v1h-1zM400,752h1v1h-1zM418,752h1v1h-1zM435,752h1v1h-1zM453,752h1v1h-1zM471,752h1v1h-1zM488,752h1v1h-1zM506,752h1v1h-1zM523,752h1v1h-1zM541,752h1v1h-1zM559,752h1v1h-1zM576,752h1v1h-1zM594,752h1v1h-1zM612,752h1v1h-1zM629,752h1v1h-1zM647,752h1v1h-1zM664,752h1v1h-1zM682,752h1v1h-1zM700,752h1v1h-1zM717,752h1v1h-1zM735,752h1v1h-1zM753,752h1v1h-1zM770,752h1v1h-1zM788,752h1v1h-1zM806,752h1v1h-1zM823,752h1v1h-1zM841,752h1v1h-1zM858,752h1v1h-1zM876,752h1v1h-1zM894,752h1v1h-1zM911,752h1v1h-1zM929,752h1v1h-1zM947,752h1v1h-1zM964,752h1v1h-1zM982,752h1v1h-1zM999,752h1v1h-1zM1017,752h1v1h-1zM1035,752h1v1h-1zM1052,752h1v1h-1zM1070,752h1v1h-1zM1088,752h1v1h-1zM1105,752h1v1h-1zM1123,752h1v1h-1zM1141,752h1v1h-1zM1158,752h1v1h-1zM1176,752h1v1h-1zM1193,752h1v1h-1zM1211,752h1v1h-1zM1229,752h1v1h-1zM1246,752h1v1h-1zM1264,752h1v1h-1zM1282,752h1v1h-1zM1299,752h1v1h-1zM1317,752h1v1h-1zM1334,752h1v1h-1zM1352,752h1v1h-1zM1370,752h1v1h-1zM1387,752h1v1h-1zM1405,752h1v1h-1zM1423,752h1v1h-1zM1440,752h1v1h-1zM1458,752h1v1h-1zM1475,752h1v1h-1zM1493,752h1v1h-1zM1511,752h1v1h-1zM1528,752h1v1h-1zM1546,752h1v1h-1zM1564,752h1v1h-1zM1581,752h1v1h-1zM1599,752h1v1h-1zM1617,752h1v1h-1zM1634,752h1v1h-1zM1652,752h1v1h-1zM1669,752h1v1h-1zM1687,752h1v1h-1zM1705,752h1v1h-1zM1722,752h1v1h-1zM1740,752h1v1h-1zM1758,752h1v1h-1zM1775,752h1v1h-1zM1793,752h1v1h-1zM1810,752h1v1h-1zM1828,752h1v1h-1zM1846,752h1v1h-1zM1863,752h1v1h-1zM1881,752h1v1h-1zM1899,752h1v1h-1zM12,769h1v1h-1zM30,769h1v1h-1zM47,769h1v1h-1zM65,769h1v1h-1zM83,769h1v1h-1zM100,769h1v1h-1zM118,769h1v1h-1zM136,769h1v1h-1zM153,769h1v1h-1zM171,769h1v1h-1zM188,769h1v1h-1zM206,769h1v1h-1zM224,769h1v1h-1zM241,769h1v1h-1zM259,769h1v1h-1zM277,769h1v1h-1zM294,769h1v1h-1zM312,769h1v1h-1zM329,769h1v1h-1zM347,769h1v1h-1zM365,769h1v1h-1zM382,769h1v1h-1zM400,769h1v1h-1zM418,769h1v1h-1zM435,769h1v1h-1zM453,769h1v1h-1zM471,769h1v1h-1zM488,769h1v1h-1zM506,769h1v1h-1zM523,769h1v1h-1zM541,769h1v1h-1zM559,769h1v1h-1zM576,769h1v1h-1zM594,769h1v1h-1zM612,769h1v1h-1zM629,769h1v1h-1zM647,769h1v1h-1zM664,769h1v1h-1zM682,769h1v1h-1zM700,769h1v1h-1zM717,769h1v1h-1zM735,769h1v1h-1zM753,769h1v1h-1zM770,769h1v1h-1zM788,769h1v1h-1zM806,769h1v1h-1zM823,769h1v1h-1zM841,769h1v1h-1zM858,769h1v1h-1zM876,769h1v1h-1zM894,769h1v1h-1zM911,769h1v1h-1zM929,769h1v1h-1zM947,769h1v1h-1zM964,769h1v1h-1zM982,769h1v1h-1zM999,769h1v1h-1zM1017,769h1v1h-1zM1035,769h1v1h-1zM1052,769h1v1h-1zM1070,769h1v1h-1zM1088,769h1v1h-1zM1105,769h1v1h-1zM1123,769h1v1h-1zM1141,769h1v1h-1zM1158,769h1v1h-1zM1176,769h1v1h-1zM1193,769h1v1h-1zM1211,769h1v1h-1zM1229,769h1v1h-1zM1246,769h1v1h-1zM1264,769h1v1h-1zM1282,769h1v1h-1zM1299,769h1v1h-1zM1317,769h1v1h-1zM1334,769h1v1h-1zM1352,769h1v1h-1zM1370,769h1v1h-1zM1387,769h1v1h-1zM1405,769h1v1h-1zM1423,769h1v1h-1zM1440,769h1v1h-1zM1458,769h1v1h-1zM1475,769h1v1h-1zM1493,769h1v1h-1zM1511,769h1v1h-1zM1528,769h1v1h-1zM1546,769h1v1h-1zM1564,769h1v1h-1zM1581,769h1v1h-1zM1599,769h1v1h-1zM1617,769h1v1h-1zM1634,769h1v1h-1zM1652,769h1v1h-1zM1669,769h1v1h-1zM1687,769h1v1h-1zM1705,769h1v1h-1zM1722,769h1v1h-1zM1740,769h1v1h-1zM1758,769h1v1h-1zM1775,769h1v1h-1zM1793,769h1v1h-1zM1810,769h1v1h-1zM1828,769h1v1h-1zM1846,769h1v1h-1zM1863,769h1v1h-1zM1881,769h1v1h-1zM1899,769h1v1h-1zM12,787h1v1h-1zM30,787h1v1h-1zM47,787h1v1h-1zM65,787h1v1h-1zM83,787h1v1h-1zM100,787h1v1h-1zM118,787h1v1h-1zM136,787h1v1h-1zM153,787h1v1h-1zM171,787h1v1h-1zM188,787h1v1h-1zM206,787h1v1h-1zM224,787h1v1h-1zM241,787h1v1h-1zM259,787h1v1h-1zM277,787h1v1h-1zM294,787h1v1h-1zM312,787h1v1h-1zM329,787h1v1h-1zM347,787h1v1h-1zM365,787h1v1h-1zM382,787h1v1h-1zM400,787h1v1h-1zM418,787h1v1h-1zM435,787h1v1h-1zM453,787h1v1h-1zM471,787h1v1h-1zM488,787h1v1h-1zM506,787h1v1h-1zM523,787h1v1h-1zM541,787h1v1h-1zM559,787h1v1h-1zM576,787h1v1h-1zM594,787h1v1h-1zM612,787h1v1h-1zM629,787h1v1h-1zM647,787h1v1h-1zM664,787h1v1h-1zM682,787h1v1h-1zM700,787h1v1h-1zM717,787h1v1h-1zM735,787h1v1h-1zM753,787h1v1h-1zM770,787h1v1h-1zM788,787h1v1h-1zM806,787h1v1h-1zM823,787h1v1h-1zM841,787h1v1h-1zM858,787h1v1h-1zM876,787h1v1h-1zM894,787h1v1h-1zM911,787h1v1h-1zM929,787h1v1h-1zM947,787h1v1h-1zM964,787h1v1h-1zM982,787h1v1h-1zM999,787h1v1h-1zM1017,787h1v1h-1zM1035,787h1v1h-1zM1052,787h1v1h-1zM1070,787h1v1h-1zM1088,787h1v1h-1zM1105,787h1v1h-1zM1123,787h1v1h-1zM1141,787h1v1h-1zM1158,787h1v1h-1zM1176,787h1v1h-1zM1193,787h1v1h-1zM1211,787h1v1h-1zM1229,787h1v1h-1zM1246,787h1v1h-1zM1264,787h1v1h-1zM1282,787h1v1h-1zM1299,787h1v1h-1zM1317,787h1v1h-1zM1334,787h1v1h-1zM1352,787h1v1h-1zM1370,787h1v1h-1zM1387,787h1v1h-1zM1405,787h1v1h-1zM1423,787h1v1h-1zM1440,787h1v1h-1zM1458,787h1v1h-1zM1475,787h1v1h-1zM1493,787h1v1h-1zM1511,787h1v1h-1zM1528,787h1v1h-1zM1546,787h1v1h-1zM1564,787h1v1h-1zM1581,787h1v1h-1zM1599,787h1v1h-1zM1617,787h1v1h-1zM1634,787h1v1h-1zM1652,787h1v1h-1zM1669,787h1v1h-1zM1687,787h1v1h-1zM1705,787h1v1h-1zM1722,787h1v1h-1zM1740,787h1v1h-1zM1758,787h1v1h-1zM1775,787h1v1h-1zM1793,787h1v1h-1zM1810,787h1v1h-1zM1828,787h1v1h-1zM1846,787h1v1h-1zM1863,787h1v1h-1zM1881,787h1v1h-1zM1899,787h1v1h-1zM12,805h1v1h-1zM30,805h1v1h-1zM47,805h1v1h-1zM65,805h1v1h-1zM83,805h1v1h-1zM100,805h1v1h-1zM118,805h1v1h-1zM136,805h1v1h-1zM153,805h1v1h-1zM171,805h1v1h-1zM188,805h1v1h-1zM206,805h1v1h-1zM224,805h1v1h-1zM241,805h1v1h-1zM259,805h1v1h-1zM277,805h1v1h-1zM294,805h1v1h-1zM312,805h1v1h-1zM329,805h1v1h-1zM347,805h1v1h-1zM365,805h1v1h-1zM382,805h1v1h-1zM400,805h1v1h-1zM418,805h1v1h-1zM435,805h1v1h-1zM453,805h1v1h-1zM471,805h1v1h-1zM488,805h1v1h-1zM506,805h1v1h-1zM523,805h1v1h-1zM541,805h1v1h-1zM559,805h1v1h-1zM576,805h1v1h-1zM594,805h1v1h-1zM612,805h1v1h-1zM629,805h1v1h-1zM647,805h1v1h-1zM664,805h1v1h-1zM682,805h1v1h-1zM700,805h1v1h-1zM717,805h1v1h-1zM735,805h1v1h-1zM753,805h1v1h-1zM770,805h1v1h-1zM788,805h1v1h-1zM806,805h1v1h-1zM823,805h1v1h-1zM841,805h1v1h-1zM858,805h1v1h-1zM876,805h1v1h-1zM894,805h1v1h-1zM911,805h1v1h-1zM929,805h1v1h-1zM947,805h1v1h-1zM964,805h1v1h-1zM982,805h1v1h-1zM999,805h1v1h-1zM1017,805h1v1h-1zM1035,805h1v1h-1zM1052,805h1v1h-1zM1070,805h1v1h-1zM1088,805h1v1h-1zM1105,805h1v1h-1zM1123,805h1v1h-1zM1141,805h1v1h-1zM1158,805h1v1h-1zM1176,805h1v1h-1zM1193,805h1v1h-1zM1211,805h1v1h-1zM1229,805h1v1h-1zM1246,805h1v1h-1zM1264,805h1v1h-1zM1282,805h1v1h-1zM1299,805h1v1h-1zM1317,805h1v1h-1zM1334,805h1v1h-1zM1352,805h1v1h-1zM1370,805h1v1h-1zM1387,805h1v1h-1zM1405,805h1v1h-1zM1423,805h1v1h-1zM1440,805h1v1h-1zM1458,805h1v1h-1zM1475,805h1v1h-1zM1493,805h1v1h-1zM1511,805h1v1h-1zM1528,805h1v1h-1zM1546,805h1v1h-1zM1564,805h1v1h-1zM1581,805h1v1h-1zM1599,805h1v1h-1zM1617,805h1v1h-1zM1634,805h1v1h-1zM1652,805h1v1h-1zM1669,805h1v1h-1zM1687,805h1v1h-1zM1705,805h1v1h-1zM1722,805h1v1h-1zM1740,805h1v1h-1zM1758,805h1v1h-1zM1775,805h1v1h-1zM1793,805h1v1h-1zM1810,805h1v1h-1zM1828,805h1v1h-1zM1846,805h1v1h-1zM1863,805h1v1h-1zM1881,805h1v1h-1zM1899,805h1v1h-1zM12,822h1v1h-1zM30,822h1v1h-1zM47,822h1v1h-1zM65,822h1v1h-1zM83,822h1v1h-1zM100,822h1v1h-1zM118,822h1v1h-1zM136,822h1v1h-1zM153,822h1v1h-1zM171,822h1v1h-1zM188,822h1v1h-1zM206,822h1v1h-1zM224,822h1v1h-1zM241,822h1v1h-1zM259,822h1v1h-1zM277,822h1v1h-1zM294,822h1v1h-1zM312,822h1v1h-1zM329,822h1v1h-1zM347,822h1v1h-1zM365,822h1v1h-1zM382,822h1v1h-1zM400,822h1v1h-1zM418,822h1v1h-1zM435,822h1v1h-1zM453,822h1v1h-1zM471,822h1v1h-1zM488,822h1v1h-1zM506,822h1v1h-1zM523,822h1v1h-1zM541,822h1v1h-1zM559,822h1v1h-1zM576,822h1v1h-1zM594,822h1v1h-1zM612,822h1v1h-1zM629,822h1v1h-1zM647,822h1v1h-1zM664,822h1v1h-1zM682,822h1v1h-1zM700,822h1v1h-1zM717,822h1v1h-1zM735,822h1v1h-1zM753,822h1v1h-1zM770,822h1v1h-1zM788,822h1v1h-1zM806,822h1v1h-1zM823,822h1v1h-1zM841,822h1v1h-1zM858,822h1v1h-1zM876,822h1v1h-1zM894,822h1v1h-1zM911,822h1v1h-1zM929,822h1v1h-1zM947,822h1v1h-1zM964,822h1v1h-1zM982,822h1v1h-1zM999,822h1v1h-1zM1017,822h1v1h-1zM1035,822h1v1h-1zM1052,822h1v1h-1zM1070,822h1v1h-1zM1088,822h1v1h-1zM1105,822h1v1h-1zM1123,822h1v1h-1zM1141,822h1v1h-1zM1158,822h1v1h-1zM1176,822h1v1h-1zM1193,822h1v1h-1zM1211,822h1v1h-1zM1229,822h1v1h-1zM1246,822h1v1h-1zM1264,822h1v1h-1zM1282,822h1v1h-1zM1299,822h1v1h-1zM1317,822h1v1h-1zM1334,822h1v1h-1zM1352,822h1v1h-1zM1370,822h1v1h-1zM1387,822h1v1h-1zM1405,822h1v1h-1zM1423,822h1v1h-1zM1440,822h1v1h-1zM1458,822h1v1h-1zM1475,822h1v1h-1zM1493,822h1v1h-1zM1511,822h1v1h-1zM1528,822h1v1h-1zM1546,822h1v1h-1zM1564,822h1v1h-1zM1581,822h1v1h-1zM1599,822h1v1h-1zM1617,822h1v1h-1zM1634,822h1v1h-1zM1652,822h1v1h-1zM1669,822h1v1h-1zM1687,822h1v1h-1zM1705,822h1v1h-1zM1722,822h1v1h-1zM1740,822h1v1h-1zM1758,822h1v1h-1zM1775,822h1v1h-1zM1793,822h1v1h-1zM1810,822h1v1h-1zM1828,822h1v1h-1zM1846,822h1v1h-1zM1863,822h1v1h-1zM1881,822h1v1h-1zM1899,822h1v1h-1zM12,840h1v1h-1zM30,840h1v1h-1zM47,840h1v1h-1zM65,840h1v1h-1zM83,840h1v1h-1zM100,840h1v1h-1zM118,840h1v1h-1zM136,840h1v1h-1zM153,840h1v1h-1zM171,840h1v1h-1zM188,840h1v1h-1zM206,840h1v1h-1zM224,840h1v1h-1zM241,840h1v1h-1zM259,840h1v1h-1zM277,840h1v1h-1zM294,840h1v1h-1zM312,840h1v1h-1zM329,840h1v1h-1zM347,840h1v1h-1zM365,840h1v1h-1zM382,840h1v1h-1zM400,840h1v1h-1zM418,840h1v1h-1zM435,840h1v1h-1zM453,840h1v1h-1zM471,840h1v1h-1zM488,840h1v1h-1zM506,840h1v1h-1zM523,840h1v1h-1zM541,840h1v1h-1zM559,840h1v1h-1zM576,840h1v1h-1zM594,840h1v1h-1zM612,840h1v1h-1zM629,840h1v1h-1zM647,840h1v1h-1zM664,840h1v1h-1zM682,840h1v1h-1zM700,840h1v1h-1zM717,840h1v1h-1zM735,840h1v1h-1zM753,840h1v1h-1zM770,840h1v1h-1zM788,840h1v1h-1zM806,840h1v1h-1zM823,840h1v1h-1zM841,840h1v1h-1zM858,840h1v1h-1zM876,840h1v1h-1zM894,840h1v1h-1zM911,840h1v1h-1zM929,840h1v1h-1zM947,840h1v1h-1zM964,840h1v1h-1zM982,840h1v1h-1zM999,840h1v1h-1zM1017,840h1v1h-1zM1035,840h1v1h-1zM1052,840h1v1h-1zM1070,840h1v1h-1zM1088,840h1v1h-1zM1105,840h1v1h-1zM1123,840h1v1h-1zM1141,840h1v1h-1zM1158,840h1v1h-1zM1176,840h1v1h-1zM1193,840h1v1h-1zM1211,840h1v1h-1zM1229,840h1v1h-1zM1246,840h1v1h-1zM1264,840h1v1h-1zM1282,840h1v1h-1zM1299,840h1v1h-1zM1317,840h1v1h-1zM1334,840h1v1h-1zM1352,840h1v1h-1zM1370,840h1v1h-1zM1387,840h1v1h-1zM1405,840h1v1h-1zM1423,840h1v1h-1zM1440,840h1v1h-1zM1458,840h1v1h-1zM1475,840h1v1h-1zM1493,840h1v1h-1zM1511,840h1v1h-1zM1528,840h1v1h-1zM1546,840h1v1h-1zM1564,840h1v1h-1zM1581,840h1v1h-1zM1599,840h1v1h-1zM1617,840h1v1h-1zM1634,840h1v1h-1zM1652,840h1v1h-1zM1669,840h1v1h-1zM1687,840h1v1h-1zM1705,840h1v1h-1zM1722,840h1v1h-1zM1740,840h1v1h-1zM1758,840h1v1h-1zM1775,840h1v1h-1zM1793,840h1v1h-1zM1810,840h1v1h-1zM1828,840h1v1h-1zM1846,840h1v1h-1zM1863,840h1v1h-1zM1881,840h1v1h-1zM1899,840h1v1h-1zM12,857h1v1h-1zM30,857h1v1h-1zM47,857h1v1h-1zM65,857h1v1h-1zM83,857h1v1h-1zM100,857h1v1h-1zM118,857h1v1h-1zM136,857h1v1h-1zM153,857h1v1h-1zM171,857h1v1h-1zM188,857h1v1h-1zM206,857h1v1h-1zM224,857h1v1h-1zM241,857h1v1h-1zM259,857h1v1h-1zM277,857h1v1h-1zM294,857h1v1h-1zM312,857h1v1h-1zM329,857h1v1h-1zM347,857h1v1h-1zM365,857h1v1h-1zM382,857h1v1h-1zM400,857h1v1h-1zM418,857h1v1h-1zM435,857h1v1h-1zM453,857h1v1h-1zM471,857h1v1h-1zM488,857h1v1h-1zM506,857h1v1h-1zM523,857h1v1h-1zM541,857h1v1h-1zM559,857h1v1h-1zM576,857h1v1h-1zM594,857h1v1h-1zM612,857h1v1h-1zM629,857h1v1h-1zM647,857h1v1h-1zM664,857h1v1h-1zM682,857h1v1h-1zM700,857h1v1h-1zM717,857h1v1h-1zM735,857h1v1h-1zM753,857h1v1h-1zM770,857h1v1h-1zM788,857h1v1h-1zM806,857h1v1h-1zM823,857h1v1h-1zM841,857h1v1h-1zM858,857h1v1h-1zM876,857h1v1h-1zM894,857h1v1h-1zM911,857h1v1h-1zM929,857h1v1h-1zM947,857h1v1h-1zM964,857h1v1h-1zM982,857h1v1h-1zM999,857h1v1h-1zM1017,857h1v1h-1zM1035,857h1v1h-1zM1052,857h1v1h-1zM1070,857h1v1h-1zM1088,857h1v1h-1zM1105,857h1v1h-1zM1123,857h1v1h-1zM1141,857h1v1h-1zM1158,857h1v1h-1zM1176,857h1v1h-1zM1193,857h1v1h-1zM1211,857h1v1h-1zM1229,857h1v1h-1zM1246,857h1v1h-1zM1264,857h1v1h-1zM1282,857h1v1h-1zM1299,857h1v1h-1zM1317,857h1v1h-1zM1334,857h1v1h-1zM1352,857h1v1h-1zM1370,857h1v1h-1zM1387,857h1v1h-1zM1405,857h1v1h-1zM1423,857h1v1h-1zM1440,857h1v1h-1zM1458,857h1v1h-1zM1475,857h1v1h-1zM1493,857h1v1h-1zM1511,857h1v1h-1zM1528,857h1v1h-1zM1546,857h1v1h-1zM1564,857h1v1h-1zM1581,857h1v1h-1zM1599,857h1v1h-1zM1617,857h1v1h-1zM1634,857h1v1h-1zM1652,857h1v1h-1zM1669,857h1v1h-1zM1687,857h1v1h-1zM1705,857h1v1h-1zM1722,857h1v1h-1zM1740,857h1v1h-1zM1758,857h1v1h-1zM1775,857h1v1h-1zM1793,857h1v1h-1zM1810,857h1v1h-1zM1828,857h1v1h-1zM1846,857h1v1h-1zM1863,857h1v1h-1zM1881,857h1v1h-1zM1899,857h1v1h-1zM12,875h1v1h-1zM30,875h1v1h-1zM47,875h1v1h-1zM65,875h1v1h-1zM83,875h1v1h-1zM100,875h1v1h-1zM118,875h1v1h-1zM136,875h1v1h-1zM153,875h1v1h-1zM171,875h1v1h-1zM188,875h1v1h-1zM206,875h1v1h-1zM224,875h1v1h-1zM241,875h1v1h-1zM259,875h1v1h-1zM277,875h1v1h-1zM294,875h1v1h-1zM312,875h1v1h-1zM329,875h1v1h-1zM347,875h1v1h-1zM365,875h1v1h-1zM382,875h1v1h-1zM400,875h1v1h-1zM418,875h1v1h-1zM435,875h1v1h-1zM453,875h1v1h-1zM471,875h1v1h-1zM488,875h1v1h-1zM506,875h1v1h-1zM523,875h1v1h-1zM541,875h1v1h-1zM559,875h1v1h-1zM576,875h1v1h-1zM594,875h1v1h-1zM612,875h1v1h-1zM629,875h1v1h-1zM647,875h1v1h-1zM664,875h1v1h-1zM682,875h1v1h-1zM700,875h1v1h-1zM717,875h1v1h-1zM735,875h1v1h-1zM753,875h1v1h-1zM770,875h1v1h-1zM788,875h1v1h-1zM806,875h1v1h-1zM823,875h1v1h-1zM841,875h1v1h-1zM858,875h1v1h-1zM876,875h1v1h-1zM894,875h1v1h-1zM911,875h1v1h-1zM929,875h1v1h-1zM947,875h1v1h-1zM964,875h1v1h-1zM982,875h1v1h-1zM999,875h1v1h-1zM1017,875h1v1h-1zM1035,875h1v1h-1zM1052,875h1v1h-1zM1070,875h1v1h-1zM1088,875h1v1h-1zM1105,875h1v1h-1zM1123,875h1v1h-1zM1141,875h1v1h-1zM1158,875h1v1h-1zM1176,875h1v1h-1zM1193,875h1v1h-1zM1211,875h1v1h-1zM1229,875h1v1h-1zM1246,875h1v1h-1zM1264,875h1v1h-1zM1282,875h1v1h-1zM1299,875h1v1h-1zM1317,875h1v1h-1zM1334,875h1v1h-1zM1352,875h1v1h-1zM1370,875h1v1h-1zM1387,875h1v1h-1zM1405,875h1v1h-1zM1423,875h1v1h-1zM1440,875h1v1h-1zM1458,875h1v1h-1zM1475,875h1v1h-1zM1493,875h1v1h-1zM1511,875h1v1h-1zM1528,875h1v1h-1zM1546,875h1v1h-1zM1564,875h1v1h-1zM1581,875h1v1h-1zM1599,875h1v1h-1zM1617,875h1v1h-1zM1634,875h1v1h-1zM1652,875h1v1h-1zM1669,875h1v1h-1zM1687,875h1v1h-1zM1705,875h1v1h-1zM1722,875h1v1h-1zM1740,875h1v1h-1zM1758,875h1v1h-1zM1775,875h1v1h-1zM1793,875h1v1h-1zM1810,875h1v1h-1zM1828,875h1v1h-1zM1846,875h1v1h-1zM1863,875h1v1h-1zM1881,875h1v1h-1zM1899,875h1v1h-1zM12,893h1v1h-1zM30,893h1v1h-1zM47,893h1v1h-1zM65,893h1v1h-1zM83,893h1v1h-1zM100,893h1v1h-1zM118,893h1v1h-1zM136,893h1v1h-1zM153,893h1v1h-1zM171,893h1v1h-1zM188,893h1v1h-1zM206,893h1v1h-1zM224,893h1v1h-1zM241,893h1v1h-1zM259,893h1v1h-1zM277,893h1v1h-1zM294,893h1v1h-1zM312,893h1v1h-1zM329,893h1v1h-1zM347,893h1v1h-1zM365,893h1v1h-1zM382,893h1v1h-1zM400,893h1v1h-1zM418,893h1v1h-1zM435,893h1v1h-1zM453,893h1v1h-1zM471,893h1v1h-1zM488,893h1v1h-1zM506,893h1v1h-1zM523,893h1v1h-1zM541,893h1v1h-1zM559,893h1v1h-1zM576,893h1v1h-1zM594,893h1v1h-1zM612,893h1v1h-1zM629,893h1v1h-1zM647,893h1v1h-1zM664,893h1v1h-1zM682,893h1v1h-1zM700,893h1v1h-1zM717,893h1v1h-1zM735,893h1v1h-1zM753,893h1v1h-1zM770,893h1v1h-1zM788,893h1v1h-1zM806,893h1v1h-1zM823,893h1v1h-1zM841,893h1v1h-1zM858,893h1v1h-1zM876,893h1v1h-1zM894,893h1v1h-1zM911,893h1v1h-1zM929,893h1v1h-1zM947,893h1v1h-1zM964,893h1v1h-1zM982,893h1v1h-1zM999,893h1v1h-1zM1017,893h1v1h-1zM1035,893h1v1h-1zM1052,893h1v1h-1zM1070,893h1v1h-1zM1088,893h1v1h-1zM1105,893h1v1h-1zM1123,893h1v1h-1zM1141,893h1v1h-1zM1158,893h1v1h-1zM1176,893h1v1h-1zM1193,893h1v1h-1zM1211,893h1v1h-1zM1229,893h1v1h-1zM1246,893h1v1h-1zM1264,893h1v1h-1zM1282,893h1v1h-1zM1299,893h1v1h-1zM1317,893h1v1h-1zM1334,893h1v1h-1zM1352,893h1v1h-1zM1370,893h1v1h-1zM1387,893h1v1h-1zM1405,893h1v1h-1zM1423,893h1v1h-1zM1440,893h1v1h-1zM1458,893h1v1h-1zM1475,893h1v1h-1zM1493,893h1v1h-1zM1511,893h1v1h-1zM1528,893h1v1h-1zM1546,893h1v1h-1zM1564,893h1v1h-1zM1581,893h1v1h-1zM1599,893h1v1h-1zM1617,893h1v1h-1zM1634,893h1v1h-1zM1652,893h1v1h-1zM1669,893h1v1h-1zM1687,893h1v1h-1zM1705,893h1v1h-1zM1722,893h1v1h-1zM1740,893h1v1h-1zM1758,893h1v1h-1zM1775,893h1v1h-1zM1793,893h1v1h-1zM1810,893h1v1h-1zM1828,893h1v1h-1zM1846,893h1v1h-1zM1863,893h1v1h-1zM1881,893h1v1h-1zM1899,893h1v1h-1zM12,910h1v1h-1zM30,910h1v1h-1zM47,910h1v1h-1zM65,910h1v1h-1zM83,910h1v1h-1zM100,910h1v1h-1zM118,910h1v1h-1zM136,910h1v1h-1zM153,910h1v1h-1zM171,910h1v1h-1zM188,910h1v1h-1zM206,910h1v1h-1zM224,910h1v1h-1zM241,910h1v1h-1zM259,910h1v1h-1zM277,910h1v1h-1zM294,910h1v1h-1zM312,910h1v1h-1zM329,910h1v1h-1zM347,910h1v1h-1zM365,910h1v1h-1zM382,910h1v1h-1zM400,910h1v1h-1zM418,910h1v1h-1zM435,910h1v1h-1zM453,910h1v1h-1zM471,910h1v1h-1zM488,910h1v1h-1zM506,910h1v1h-1zM523,910h1v1h-1zM541,910h1v1h-1zM559,910h1v1h-1zM576,910h1v1h-1zM594,910h1v1h-1zM612,910h1v1h-1zM629,910h1v1h-1zM647,910h1v1h-1zM664,910h1v1h-1zM682,910h1v1h-1zM700,910h1v1h-1zM717,910h1v1h-1zM735,910h1v1h-1zM753,910h1v1h-1zM770,910h1v1h-1zM788,910h1v1h-1zM806,910h1v1h-1zM823,910h1v1h-1zM841,910h1v1h-1zM858,910h1v1h-1zM876,910h1v1h-1zM894,910h1v1h-1zM911,910h1v1h-1zM929,910h1v1h-1zM947,910h1v1h-1zM964,910h1v1h-1zM982,910h1v1h-1zM999,910h1v1h-1zM1017,910h1v1h-1zM1035,910h1v1h-1zM1052,910h1v1h-1zM1070,910h1v1h-1zM1088,910h1v1h-1zM1105,910h1v1h-1zM1123,910h1v1h-1zM1141,910h1v1h-1zM1158,910h1v1h-1zM1176,910h1v1h-1zM1193,910h1v1h-1zM1211,910h1v1h-1zM1229,910h1v1h-1zM1246,910h1v1h-1zM1264,910h1v1h-1zM1282,910h1v1h-1zM1299,910h1v1h-1zM1317,910h1v1h-1zM1334,910h1v1h-1zM1352,910h1v1h-1zM1370,910h1v1h-1zM1387,910h1v1h-1zM1405,910h1v1h-1zM1423,910h1v1h-1zM1440,910h1v1h-1zM1458,910h1v1h-1zM1475,910h1v1h-1zM1493,910h1v1h-1zM1511,910h1v1h-1zM1528,910h1v1h-1zM1546,910h1v1h-1zM1564,910h1v1h-1zM1581,910h1v1h-1zM1599,910h1v1h-1zM1617,910h1v1h-1zM1634,910h1v1h-1zM1652,910h1v1h-1zM1669,910h1v1h-1zM1687,910h1v1h-1zM1705,910h1v1h-1zM1722,910h1v1h-1zM1740,910h1v1h-1zM1758,910h1v1h-1zM1775,910h1v1h-1zM1793,910h1v1h-1zM1810,910h1v1h-1zM1828,910h1v1h-1zM1846,910h1v1h-1zM1863,910h1v1h-1zM1881,910h1v1h-1zM1899,910h1v1h-1zM12,928h1v1h-1zM30,928h1v1h-1zM47,928h1v1h-1zM65,928h1v1h-1zM83,928h1v1h-1zM100,928h1v1h-1zM118,928h1v1h-1zM136,928h1v1h-1zM153,928h1v1h-1zM171,928h1v1h-1zM188,928h1v1h-1zM206,928h1v1h-1zM224,928h1v1h-1zM241,928h1v1h-1zM259,928h1v1h-1zM277,928h1v1h-1zM294,928h1v1h-1zM312,928h1v1h-1zM329,928h1v1h-1zM347,928h1v1h-1zM365,928h1v1h-1zM382,928h1v1h-1zM400,928h1v1h-1zM418,928h1v1h-1zM435,928h1v1h-1zM453,928h1v1h-1zM471,928h1v1h-1zM488,928h1v1h-1zM506,928h1v1h-1zM523,928h1v1h-1zM541,928h1v1h-1zM559,928h1v1h-1zM576,928h1v1h-1zM594,928h1v1h-1zM612,928h1v1h-1zM629,928h1v1h-1zM647,928h1v1h-1zM664,928h1v1h-1zM682,928h1v1h-1zM700,928h1v1h-1zM717,928h1v1h-1zM735,928h1v1h-1zM753,928h1v1h-1zM770,928h1v1h-1zM788,928h1v1h-1zM806,928h1v1h-1zM823,928h1v1h-1zM841,928h1v1h-1zM858,928h1v1h-1zM876,928h1v1h-1zM894,928h1v1h-1zM911,928h1v1h-1zM929,928h1v1h-1zM947,928h1v1h-1zM964,928h1v1h-1zM982,928h1v1h-1zM999,928h1v1h-1zM1017,928h1v1h-1zM1035,928h1v1h-1zM1052,928h1v1h-1zM1070,928h1v1h-1zM1088,928h1v1h-1zM1105,928h1v1h-1zM1123,928h1v1h-1zM1141,928h1v1h-1zM1158,928h1v1h-1zM1176,928h1v1h-1zM1193,928h1v1h-1zM1211,928h1v1h-1zM1229,928h1v1h-1zM1246,928h1v1h-1zM1264,928h1v1h-1zM1282,928h1v1h-1zM1299,928h1v1h-1zM1317,928h1v1h-1zM1334,928h1v1h-1zM1352,928h1v1h-1zM1370,928h1v1h-1zM1387,928h1v1h-1zM1405,928h1v1h-1zM1423,928h1v1h-1zM1440,928h1v1h-1zM1458,928h1v1h-1zM1475,928h1v1h-1zM1493,928h1v1h-1zM1511,928h1v1h-1zM1528,928h1v1h-1zM1546,928h1v1h-1zM1564,928h1v1h-1zM1581,928h1v1h-1zM1599,928h1v1h-1zM1617,928h1v1h-1zM1634,928h1v1h-1zM1652,928h1v1h-1zM1669,928h1v1h-1zM1687,928h1v1h-1zM1705,928h1v1h-1zM1722,928h1v1h-1zM1740,928h1v1h-1zM1758,928h1v1h-1zM1775,928h1v1h-1zM1793,928h1v1h-1zM1810,928h1v1h-1zM1828,928h1v1h-1zM1846,928h1v1h-1zM1863,928h1v1h-1zM1881,928h1v1h-1zM1899,928h1v1h-1z" fill="#000"/><g fill="none" stroke-width="1" stroke-linecap="square" shape-rendering="crispEdges"><path d="M409.5,567.5 L1158.5,567.5 L1158.5,605" stroke="#0000ff" stroke-width="1" fill="none"/><path d="M409.5,559.2 L383,559.2 L375,567.5 L383,575.2 L409.5,575.2 L409.5,559.2" stroke="#0000ff" stroke-width="1" fill="none"/><text xml:space="preserve" x="384" y="572" font-size="13" font-weight="bold" fill="#000" textLength="22" lengthAdjust="spacingAndGlyphs" >out</text><rect x="495.0" y="565.0" width="5" height="5" fill="#0000ff" stroke="none"/><rect x="583.0" y="565.0" width="5" height="5" fill="#0000ff" stroke="none"/><rect x="671.0" y="565.0" width="5" height="5" fill="#0000ff" stroke="none"/><rect x="1059.0" y="565.0" width="5" height="5" fill="#0000ff" stroke="none"/><path d="M409.5,567.5 L409.5,694.2" stroke="#0000ff" stroke-width="1" fill="none"/><path d="M409.5,694.2 L418.7,699.4 L400.4,708.4 L418.7,716.3 L400.4,725.4 L409.5,730.2" stroke="#000090" stroke-width="1" fill="none"/><path d="M409.5,730.2 L409.5,866.5" stroke="#0000ff" stroke-width="1" fill="none"/><path d="M400.0,866.5 L419.0,866.5 L409.5,876.5 Z" stroke="#0000ff" stroke-width="1" fill="none"/><path d="M497.5,567.5 L497.5,694.2" stroke="#0000ff" stroke-width="1" fill="none"/><path d="M497.5,694.2 L506.7,699.4 L488.4,708.4 L506.7,716.3 L488.4,725.4 L497.5,730.2" stroke="#000090" stroke-width="1" fill="none"/><path d="M497.5,730.2 L497.5,866.5" stroke="#0000ff" stroke-width="1" fill="none"/><path d="M488.0,866.5 L507.0,866.5 L497.5,876.5 Z" stroke="#0000ff" stroke-width="1" fill="none"/><text xml:space="preserve" x="420.3" y="708.1" font-size="12" font-weight="bold" fill="#000" >R1</text><text xml:space="preserve" x="420.3" y="728.2" font-size="12" font-weight="bold" fill="#000" >20</text><text xml:space="preserve" x="508.2" y="708.1" font-size="12" font-weight="bold" fill="#000" >R3</text><text xml:space="preserve" x="508.2" y="728.2" font-size="12" font-weight="bold" fill="#000" >30k</text><path d="M585.5,567.5 L585.5,700" stroke="#0000ff" stroke-width="1" fill="none"/><path d="M585.5,700 L585.5,714.5" stroke="#000090" stroke-width="1" fill="none"/><path d="M576.0,714.5 L595.0,714.5" stroke="#000090" stroke-width="1" fill="none"/><path d="M576.0,719.5 L595.0,719.5" stroke="#000090" stroke-width="1" fill="none"/><path d="M585.5,719.5 L585.5,734" stroke="#000090" stroke-width="1" fill="none"/><path d="M585.5,734 L585.5,866.5" stroke="#0000ff" stroke-width="1" fill="none"/><path d="M576.0,866.5 L595.0,866.5 L585.5,876.5 Z" stroke="#0000ff" stroke-width="1" fill="none"/><path d="M673.5,567.5 L673.5,700" stroke="#0000ff" stroke-width="1" fill="none"/><path d="M673.5,700 L673.5,714.5" stroke="#000090" stroke-width="1" fill="none"/><path d="M664.0,714.5 L683.0,714.5" stroke="#000090" stroke-width="1" fill="none"/><path d="M664.0,719.5 L683.0,719.5" stroke="#000090" stroke-width="1" fill="none"/><path d="M673.5,719.5 L673.5,734" stroke="#000090" stroke-width="1" fill="none"/><path d="M673.5,734 L673.5,866.5" stroke="#0000ff" stroke-width="1" fill="none"/><path d="M664.0,866.5 L683.0,866.5 L673.5,876.5 Z" stroke="#0000ff" stroke-width="1" fill="none"/><rect x="671.0" y="697.0" width="5" height="5" fill="#0000ff" stroke="none"/><text xml:space="preserve" x="590" y="707.9" font-size="12" font-weight="bold" fill="#000" >C5</text><text xml:space="preserve" x="590.5" y="734.7" font-size="12" font-weight="bold" fill="#000" textLength="27" lengthAdjust="spacingAndGlyphs" >0.9μ</text><text xml:space="preserve" x="678.2" y="708" font-size="12" font-weight="bold" fill="#000" >C3</text><text xml:space="preserve" x="678.7" y="734.7" font-size="12" font-weight="bold" fill="#000" textLength="39" lengthAdjust="spacingAndGlyphs" >2098μ</text><path d="M1273.5,690.5 L1273.5,744" stroke="#0000ff" stroke-width="1" fill="none"/><path d="M1273.5,744 L1273.5,758.5" stroke="#000090" stroke-width="1" fill="none"/><path d="M1264.0,758.5 L1283.0,758.5" stroke="#000090" stroke-width="1" fill="none"/><path d="M1264.0,763.5 L1283.0,763.5" stroke="#000090" stroke-width="1" fill="none"/><path d="M1273.5,763.5 L1273.5,778" stroke="#000090" stroke-width="1" fill="none"/><path d="M1273.5,778 L1273.5,866.5" stroke="#0000ff" stroke-width="1" fill="none"/><path d="M1264.0,866.5 L1283.0,866.5 L1273.5,876.5 Z" stroke="#0000ff" stroke-width="1" fill="none"/><path d="M1361.5,690.5 L1361.5,753.5" stroke="#0000ff" stroke-width="1" fill="none"/><path d="M1361.5,753.5 L1361.5,768.0" stroke="#000090" stroke-width="1" fill="none"/><path d="M1352.0,768.0 L1371.0,768.0" stroke="#000090" stroke-width="1" fill="none"/><path d="M1352.0,773.0 L1371.0,773.0" stroke="#000090" stroke-width="1" fill="none"/><path d="M1361.5,773.0 L1361.5,787.5" stroke="#000090" stroke-width="1" fill="none"/><path d="M1361.5,787.5 L1361.5,866.5" stroke="#0000ff" stroke-width="1" fill="none"/><path d="M1352.0,866.5 L1371.0,866.5 L1361.5,876.5 Z" stroke="#0000ff" stroke-width="1" fill="none"/><text xml:space="preserve" x="1277.2" y="752.3" font-size="12" font-weight="bold" fill="#000" >C2</text><text xml:space="preserve" x="1277.5" y="778.9" font-size="12" font-weight="bold" fill="#000" textLength="31" lengthAdjust="spacingAndGlyphs" >378μ</text><text xml:space="preserve" x="1365" y="760.8" font-size="12" font-weight="bold" fill="#000" >C4</text><text xml:space="preserve" x="1365.3" y="788.5" font-size="12" font-weight="bold" fill="#000" textLength="27" lengthAdjust="spacingAndGlyphs" >0.1μ</text><path d="M779.5,664.5 L867.5,664.5 L867.5,743.5 L779.5,743.5 L779.5,664.5" stroke="#000090" stroke-width="1" fill="none"/><path d="M779.5,690.5 L761.5,690.5 L761.5,646.5 L885.5,646.5 L885.5,716.5 L875.5,716.5" stroke="#0000ff" stroke-width="1" fill="none"/><circle cx="871.6" cy="716.5" r="3.8" stroke="#000090" fill="none"/><path d="M867.5,690.5 L929.5,690.5" stroke="#0000ff" stroke-width="1" fill="none"/><path d="M779.5,716.5 L761.5,716.5 L761.5,818.4" stroke="#0000ff" stroke-width="1" fill="none"/><path d="M779.5,713.2 L783.7,716.5 L779.5,720.6" stroke="#000090" stroke-width="1" fill="none"/><rect x="821.5" y="662.5" width="4" height="4" fill="none" stroke="#0000ff" stroke-width="1"/><rect x="821.5" y="741.5" width="4" height="4" fill="none" stroke="#0000ff" stroke-width="1"/><rect x="777.5" y="741.5" width="4" height="4" fill="none" stroke="#0000ff" stroke-width="1"/><text xml:space="preserve" x="828.2" y="659.9" font-size="12" font-weight="bold" fill="#000" textLength="15.8" lengthAdjust="spacingAndGlyphs" >A1</text><text xml:space="preserve" x="811.8" y="677.8" font-size="12" font-weight="bold" fill="#000" textLength="23.5" lengthAdjust="spacingAndGlyphs" >PRE</text><text xml:space="preserve" x="783.7" y="694.8" font-size="12" font-weight="bold" fill="#000" >D</text><text xml:space="preserve" x="856" y="694.8" font-size="12" font-weight="bold" fill="#000" >Q</text><text xml:space="preserve" x="856" y="720.8" font-size="12" font-weight="bold" fill="#000" >Q</text><rect x="856" y="708" width="9" height="2" fill="#000" stroke="none"/><text xml:space="preserve" x="783.7" y="720.8" font-size="12" font-weight="bold" fill="#000" textLength="22.5" lengthAdjust="spacingAndGlyphs" >CLK</text><text xml:space="preserve" x="811.5" y="737.8" font-size="12" font-weight="bold" fill="#000" textLength="23.5" lengthAdjust="spacingAndGlyphs" >CLR</text><path d="M929.5,672.7 L965,690.5 L929.5,707.9 L929.5,672.7" stroke="#000090" stroke-width="1" fill="none"/><path d="M947.2,681.8 L964,681.8" stroke="#000090" stroke-width="1" fill="none"/><path d="M964,681.8 L982.5,681.8 L982.5,611.5 L999.5,611.5" stroke="#0000ff" stroke-width="1" fill="none"/><circle cx="957.2" cy="698.6" r="4" stroke="#000090" fill="none"/><path d="M961.3,699.5 L964,699.5" stroke="#000090" stroke-width="1" fill="none"/><path d="M964,699.5 L982.5,699.5 L982.5,743.5 L1045.6,743.5" stroke="#0000ff" stroke-width="1" fill="none"/><rect x="927.5" y="706.0" width="4" height="3" fill="none" stroke="#0000ff" stroke-width="1"/><text xml:space="preserve" x="933.3" y="669" font-size="12" font-weight="bold" fill="#000" textLength="16.6" lengthAdjust="spacingAndGlyphs" >A5</text><path d="M761.5,818.4 L761.5,818.4" stroke="#0000ff" stroke-width="1" fill="none"/><circle cx="761.5" cy="835.2" r="16.8" stroke="#000090" fill="none"/><path d="M757,824.3 L766.5,824.3" stroke="#000090" stroke-width="1" fill="none"/><path d="M761.5,819.8 L761.5,829.5" stroke="#000090" stroke-width="1" fill="none"/><path d="M757,846.5 L766.5,846.5" stroke="#000090" stroke-width="1" fill="none"/><path d="M761.5,852 L761.5,856.5" stroke="#000090" stroke-width="1" fill="none"/><path d="M761.5,856.5 L761.5,866.5" stroke="#0000ff" stroke-width="1" fill="none"/><path d="M752.0,866.5 L771.0,866.5 L761.5,876.5 Z" stroke="#0000ff" stroke-width="1" fill="none"/><text xml:space="preserve" x="775.1" y="818" font-size="12" font-weight="bold" fill="#000" textLength="15.4" lengthAdjust="spacingAndGlyphs" >V2</text><text xml:space="preserve" x="775.1" y="862" font-size="12" font-weight="bold" fill="#000" textLength="165.3" lengthAdjust="spacingAndGlyphs" >SINE(0 1 20000 0 0 0 200)</text><path d="M1061.5,567.5 L1061.5,603" stroke="#0000ff" stroke-width="1" fill="none"/><path d="M1061.5,603 L1061.5,613" stroke="#000090" stroke-width="1" fill="none"/><circle cx="1061.5" cy="623.6" r="17.3" stroke="#000090" fill="none"/><circle cx="1061" cy="615.1" r="1.8" stroke="#000090" fill="none" shape-rendering="auto" stroke-width="1"/><circle cx="1071.9" cy="621.3" r="1.8" stroke="#000090" fill="none" shape-rendering="auto" stroke-width="1"/><path d="M1061.5,635.3 L1070.5,622.8" stroke="#000090" stroke-width="1" fill="none"/><path d="M1061.5,635.3 L1061.5,645" stroke="#000090" stroke-width="1" fill="none"/><path d="M1061.5,645 L1061.5,690.5" stroke="#0000ff" stroke-width="1" fill="none"/><rect x="1033.5" y="609.5" width="3" height="3" fill="none" stroke="#0000ff" stroke-width="1"/><path d="M1037,611.5 L1046,611.5 L1048.5,613.5" stroke="#000090" stroke-width="1" fill="none"/><path d="M1035,615.5 L1040,615.5" stroke="#000090" stroke-width="1" fill="none"/><path d="M1037.5,613 L1037.5,618" stroke="#000090" stroke-width="1" fill="none"/><path d="M1035,633.5 L1040,633.5" stroke="#000090" stroke-width="1" fill="none"/><path d="M1048.5,634 L1045.5,637.5 L1035.5,637.5" stroke="#000090" stroke-width="1" fill="none"/><path d="M1035.5,637.5 L1035.5,655.3" stroke="#0000ff" stroke-width="1" fill="none"/><path d="M1026.0,655.3 L1045.0,655.3 L1035.5,665.3 Z" stroke="#0000ff" stroke-width="1" fill="none"/><path d="M1061.5,690.5 L1061.5,735" stroke="#0000ff" stroke-width="1" fill="none"/><path d="M1061.5,735 L1061.5,745" stroke="#000090" stroke-width="1" fill="none"/><circle cx="1061.5" cy="755.6" r="17.3" stroke="#000090" fill="none"/><circle cx="1061" cy="747.1" r="1.8" stroke="#000090" fill="none" shape-rendering="auto" stroke-width="1"/><circle cx="1071.9" cy="753.3" r="1.8" stroke="#000090" fill="none" shape-rendering="auto" stroke-width="1"/><path d="M1061.5,767.3 L1070.5,754.8" stroke="#000090" stroke-width="1" fill="none"/><path d="M1061.5,767.3 L1061.5,777" stroke="#000090" stroke-width="1" fill="none"/><path d="M1061.5,777 L1061.5,866.5" stroke="#0000ff" stroke-width="1" fill="none"/><path d="M1035,747.5 L1040,747.5" stroke="#000090" stroke-width="1" fill="none"/><path d="M1037.5,745 L1037.5,750" stroke="#000090" stroke-width="1" fill="none"/><path d="M1035,765.5 L1040,765.5" stroke="#000090" stroke-width="1" fill="none"/><path d="M1048.5,766 L1045.5,769.5 L1035.5,769.5" stroke="#000090" stroke-width="1" fill="none"/><path d="M1035.5,769.5 L1035.5,787.3" stroke="#0000ff" stroke-width="1" fill="none"/><path d="M1026.0,787.3 L1045.0,787.3 L1035.5,797.3 Z" stroke="#0000ff" stroke-width="1" fill="none"/><path d="M1045.6,743.5 L1048,745" stroke="#000090" stroke-width="1" fill="none"/><path d="M1052.0,866.5 L1071.0,866.5 L1061.5,876.5 Z" stroke="#0000ff" stroke-width="1" fill="none"/><rect x="1059.0" y="688.0" width="5" height="5" fill="#0000ff" stroke="none"/><rect x="1156.0" y="688.0" width="5" height="5" fill="#0000ff" stroke="none"/><path d="M1061.5,690.5 L1193.3,690.5" stroke="#0000ff" stroke-width="1" fill="none"/><text xml:space="preserve" x="1074.3" y="606.7" font-size="12" font-weight="bold" fill="#000" textLength="44.8" lengthAdjust="spacingAndGlyphs" >MYSW1</text><text xml:space="preserve" x="1074.3" y="650.5" font-size="12" font-weight="bold" fill="#000" textLength="15.3" lengthAdjust="spacingAndGlyphs" >S2</text><text xml:space="preserve" x="1074.3" y="739" font-size="12" font-weight="bold" fill="#000" textLength="45.8" lengthAdjust="spacingAndGlyphs" >MYSW2</text><text xml:space="preserve" x="1074.3" y="783" font-size="12" font-weight="bold" fill="#000" textLength="14.9" lengthAdjust="spacingAndGlyphs" >S1</text><path d="M1158.5,605 L1158.5,612" stroke="#0000ff" stroke-width="1" fill="none"/><path d="M1158.5,612 L1158.5,622.4" stroke="#000090" stroke-width="1" fill="none"/><path d="M1149.5,622.4 L1167.5,622.4" stroke="#000090" stroke-width="1" fill="none"/><path d="M1158.5,622.4 L1167.5,635.2 L1149.5,635.2 L1158.5,622.4" stroke="#000090" stroke-width="1" fill="none"/><path d="M1158.5,635.2 L1158.5,642" stroke="#000090" stroke-width="1" fill="none"/><path d="M1158.5,642 L1158.5,690.5" stroke="#0000ff" stroke-width="1" fill="none"/><path d="M1158.5,690.5 L1158.5,744" stroke="#0000ff" stroke-width="1" fill="none"/><path d="M1158.5,744 L1158.5,754.4" stroke="#000090" stroke-width="1" fill="none"/><path d="M1149.5,754.4 L1167.5,754.4" stroke="#000090" stroke-width="1" fill="none"/><path d="M1158.5,754.4 L1167.5,767.2 L1149.5,767.2 L1158.5,754.4" stroke="#000090" stroke-width="1" fill="none"/><path d="M1158.5,767.2 L1158.5,774" stroke="#000090" stroke-width="1" fill="none"/><path d="M1158.5,774 L1158.5,866.5" stroke="#0000ff" stroke-width="1" fill="none"/><path d="M1149.0,866.5 L1168.0,866.5 L1158.5,876.5 Z" stroke="#0000ff" stroke-width="1" fill="none"/><text xml:space="preserve" x="1137.8" y="615.6" font-size="12" font-weight="bold" fill="#000" textLength="15.7" lengthAdjust="spacingAndGlyphs" >D4</text><text xml:space="preserve" x="1146" y="651" font-size="12" font-weight="bold" fill="#000" textLength="9" lengthAdjust="spacingAndGlyphs" >D</text><text xml:space="preserve" x="1137.6" y="747.9" font-size="12" font-weight="bold" fill="#000" textLength="15.5" lengthAdjust="spacingAndGlyphs" >D3</text><text xml:space="preserve" x="1145.7" y="783" font-size="12" font-weight="bold" fill="#000" textLength="9" lengthAdjust="spacingAndGlyphs" >D</text><path d="M1193.3,690.5 Q1196,681.5 1202.6,681.5 Q1208,681.5 1210.5,686.5 M1207.8,686 Q1211,681.5 1215.4,681.5 Q1220.5,681.5 1223.8,686.5 M1221,686 Q1224.5,681.5 1229.7,681.5 Q1236.5,681.5 1237.7,690.5" stroke="#000090" fill="none"/><ellipse cx="1209.5" cy="690.2" rx="2.1" ry="5.8" stroke="#000090" fill="none"/><ellipse cx="1222.4" cy="690.2" rx="2.1" ry="5.8" stroke="#000090" fill="none"/><path d="M1237.7,690.5 L1449.5,690.5" stroke="#0000ff" stroke-width="1" fill="none"/><text xml:space="preserve" x="1207.9" y="677.8" font-size="12" font-weight="bold" fill="#000" textLength="13.3" lengthAdjust="spacingAndGlyphs" >L1</text><text xml:space="preserve" x="1199.9" y="707.6" font-size="12" font-weight="bold" fill="#000" textLength="30.4" lengthAdjust="spacingAndGlyphs" >212μ</text><rect x="1271.0" y="688.0" width="5" height="5" fill="#0000ff" stroke="none"/><rect x="1359.0" y="688.0" width="5" height="5" fill="#0000ff" stroke="none"/><path d="M1449.5,690.5 L1458,682.6 L1472.5,682.6 L1472.5,697.5 L1458,697.5 L1449.5,690.5" stroke="#0000ff" stroke-width="1" fill="none"/><text xml:space="preserve" x="1457.4" y="695.2" font-size="12" font-weight="bold" fill="#000" textLength="10" lengthAdjust="spacingAndGlyphs" >in</text><path d="M1449.5,690.5 L1449.5,747.4" stroke="#0000ff" stroke-width="1" fill="none"/><circle cx="1449.5" cy="764.7" r="17.2" stroke="#000090" fill="none"/><path d="M1445.2,754.9 L1453.8,754.9" stroke="#000090" stroke-width="1" fill="none"/><path d="M1449.5,750.7 L1449.5,759.3" stroke="#000090" stroke-width="1" fill="none"/><path d="M1445.2,776.5 L1453.8,776.5" stroke="#000090" stroke-width="1" fill="none"/><path d="M1449.5,782 L1449.5,866.5" stroke="#0000ff" stroke-width="1" fill="none"/><path d="M1440.0,866.5 L1459.0,866.5 L1449.5,876.5 Z" stroke="#0000ff" stroke-width="1" fill="none"/><text xml:space="preserve" x="1462.4" y="747.8" font-size="12" font-weight="bold" fill="#000" textLength="14.4" lengthAdjust="spacingAndGlyphs" >V1</text><text xml:space="preserve" x="1462.4" y="791.9" font-size="12" font-weight="bold" fill="#000" textLength="23" lengthAdjust="spacingAndGlyphs" >360</text><text xml:space="preserve" x="1462.4" y="807.2" font-size="12" font-weight="bold" fill="#000" textLength="55.6" lengthAdjust="spacingAndGlyphs" >Rser=.01</text><text xml:space="preserve" x="1458.6" y="835.6" font-size="12" font-weight="bold" fill="#000" textLength="59.8" lengthAdjust="spacingAndGlyphs" >.tran 10m</text></g><text xml:space="preserve" x="1233.2" y="575.7" font-size="12" font-weight="bold" fill="#0000c8" textLength="220.3" lengthAdjust="spacingAndGlyphs" >Boost with MYSW2 toggled On/Off.</text><text xml:space="preserve" x="1233.2" y="606.5" font-size="12" font-weight="bold" fill="#0000c8" textLength="217" lengthAdjust="spacingAndGlyphs" >Buck  with MYSW1 toggled On/Off.</text><text xml:space="preserve" x="908.1" y="907" font-size="12" font-weight="bold" fill="#000" textLength="417" lengthAdjust="spacingAndGlyphs" >.model MYSW2 SW(Ron=.001 Roff=1Meg Vt=.6 Vh=-.4 Ilimit=300)</text><g clip-path="url(#clipsch)"><text xml:space="preserve" x="911.8" y="929" font-size="12" font-weight="bold" fill="#000" textLength="417" lengthAdjust="spacingAndGlyphs" >.model MYSW1 SW(Ron=.001 Roff=1Meg Vt=.6 Vh=-.4 Ilimit=300)</text></g><rect x="1168" y="539" width="2" height="2" fill="#0000ff"/></svg></body></html>
